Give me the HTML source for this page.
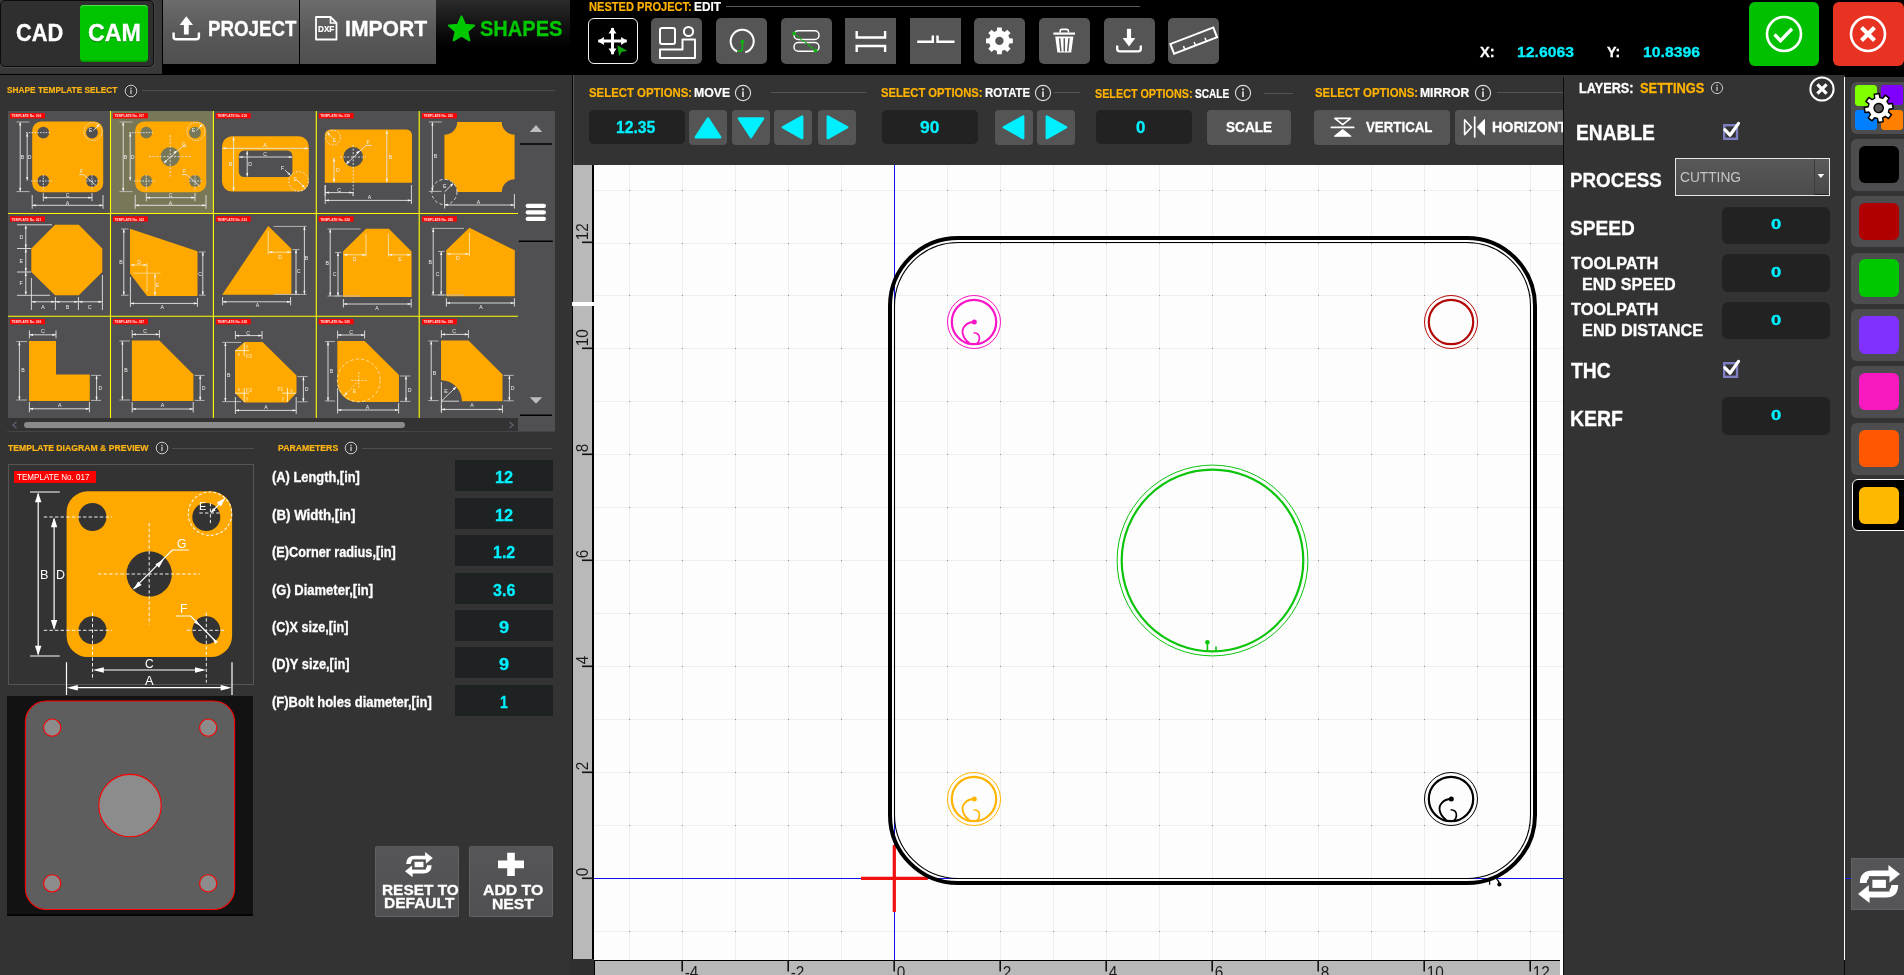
<!DOCTYPE html>
<html><head><meta charset="utf-8"><title>CAM</title>
<style>
html,body{margin:0;padding:0}
body{width:1904px;height:975px;background:#000;overflow:hidden;position:relative;font-family:"Liberation Sans",sans-serif}
svg{display:block;overflow:visible}
#root{position:absolute;left:0;top:0;width:1904px;height:975px;overflow:hidden;will-change:transform}
</style></head><body><div id="root">
<div style="position:absolute;left:0.00px;top:0.00px;width:162.00px;height:75.00px;background:#393939;"></div>
<div style="position:absolute;left:0.00px;top:73.80px;width:162.00px;height:1.20px;background:#000;"></div>
<div style="position:absolute;left:-0.50px;top:-0.50px;width:154.50px;height:67.20px;background:#2f2f2f;border:1.2px solid #0c0c0c;border-radius:5px;box-sizing:border-box;box-shadow:0 1px 0 #4a4a4a,1px 0 0 #444"></div>
<div style="position:absolute;left:80.00px;top:4.50px;width:68.20px;height:57.50px;background:#00c400;border-radius:4px;box-shadow:inset 0 -1.5px 0 #009a00,inset 0 1px 0 #4ae04a"></div>
<span style="position:absolute;left:16.13px;top:21px;font:700 24.1px/1 'Liberation Sans',sans-serif;color:#fff;white-space:nowrap;transform-origin:0 0;transform:scaleX(0.9055);-webkit-text-stroke:.3px #fff;">CAD</span>
<span style="position:absolute;left:87.87px;top:21px;font:700 24.1px/1 'Liberation Sans',sans-serif;color:#fff;white-space:nowrap;transform-origin:0 0;transform:scaleX(0.9656);text-shadow:0 1px 1px rgba(0,60,0,.6);-webkit-text-stroke:.3px #fff;">CAM</span>
<div style="position:absolute;left:163.00px;top:0.00px;width:136.00px;height:63.50px;background:linear-gradient(#6c6c6c,#595959 50%,#4f4f4f);"></div>
<div style="position:absolute;left:300.00px;top:0.00px;width:136.00px;height:63.50px;background:linear-gradient(#6c6c6c,#595959 50%,#4f4f4f);"></div>
<div style="position:absolute;left:436.00px;top:0.00px;width:134.00px;height:63.00px;background:linear-gradient(#2b2b2b,#101010 45%,#000 75%);"></div>
<span style="position:absolute;left:207.78px;top:18px;font:700 21.8px/1 'Liberation Sans',sans-serif;color:#fff;white-space:nowrap;transform-origin:0 0;transform:scaleX(0.8592);-webkit-text-stroke:.3px #fff;">PROJECT</span>
<span style="position:absolute;left:344.87px;top:18px;font:700 21.8px/1 'Liberation Sans',sans-serif;color:#fff;white-space:nowrap;transform-origin:0 0;transform:scaleX(0.9709);-webkit-text-stroke:.3px #fff;">IMPORT</span>
<span style="position:absolute;left:480.40px;top:18px;font:700 21.8px/1 'Liberation Sans',sans-serif;color:#00c800;white-space:nowrap;transform-origin:0 0;transform:scaleX(0.9186);-webkit-text-stroke:.3px #00c800;">SHAPES</span>
<svg style="position:absolute;left:170px;top:14px" width="32" height="28" viewBox="170 14 32 28"><path d="M173.6 32.5v4.2a2.6 2.6 0 0 0 2.6 2.6h20.1a2.6 2.6 0 0 0 2.6-2.6v-4.2" fill="none" stroke="#fff" stroke-width="2.4"/><path d="M186.3 16.3l6.7 8.8h-4.3v9.4h-4.8v-9.4h-4.3z" fill="#fff"/></svg>
<svg style="position:absolute;left:313px;top:14px" width="28" height="28" viewBox="313 14 28 28"><path d="M316 17h14.5l6 6v16.5h-20.5z" fill="none" stroke="#fff" stroke-width="1.8" stroke-linejoin="round"/><path d="M330.5 17v6h6" fill="none" stroke="#fff" stroke-width="1.6"/></svg>
<span style="position:absolute;left:318.47px;top:25px;font:700 9.0px/1 'Liberation Sans',sans-serif;color:#fff;white-space:nowrap;transform-origin:0 0;transform:scaleX(0.9064);-webkit-text-stroke:.2px #fff;">DXF</span>
<svg style="position:absolute;left:445px;top:13px" width="34" height="30" viewBox="445 13 34 30"><path d="M461.5 16.5l3.6 8.3 9 .8-6.8 5.9 2.1 8.8-7.9-4.7-7.9 4.7 2.1-8.8-6.8-5.9 9-.8z" fill="#00c800" stroke="#00c800" stroke-width="2" stroke-linejoin="round"/></svg>
<span style="position:absolute;left:589.28px;top:1px;font:700 12.6px/1 'Liberation Sans',sans-serif;color:#ffb300;white-space:nowrap;transform-origin:0 0;transform:scaleX(0.8794);-webkit-text-stroke:.2px #ffb300;">NESTED PROJECT:</span>
<span style="position:absolute;left:694.23px;top:1px;font:700 12.6px/1 'Liberation Sans',sans-serif;color:#fff;white-space:nowrap;transform-origin:0 0;transform:scaleX(0.9380);-webkit-text-stroke:.2px #fff;">EDIT</span>
<div style="position:absolute;left:725.50px;top:6.00px;width:414.50px;height:1.00px;background:#5a5a5a;"></div>
<span style="position:absolute;left:1479.85px;top:44px;font:700 15.3px/1 'Liberation Sans',sans-serif;color:#fff;white-space:nowrap;transform-origin:0 0;transform:scaleX(0.9547);-webkit-text-stroke:.3px #fff;">X:</span>
<span style="position:absolute;left:1516.55px;top:44px;font:700 15.3px/1 'Liberation Sans',sans-serif;color:#00f0ff;white-space:nowrap;transform-origin:0 0;transform:scaleX(1.0305);-webkit-text-stroke:.3px #00f0ff;">12.6063</span>
<span style="position:absolute;left:1607.22px;top:44px;font:700 15.3px/1 'Liberation Sans',sans-serif;color:#fff;white-space:nowrap;transform-origin:0 0;transform:scaleX(0.9279);-webkit-text-stroke:.3px #fff;">Y:</span>
<span style="position:absolute;left:1642.55px;top:44px;font:700 15.3px/1 'Liberation Sans',sans-serif;color:#00f0ff;white-space:nowrap;transform-origin:0 0;transform:scaleX(1.0305);-webkit-text-stroke:.3px #00f0ff;">10.8396</span>
<div style="position:absolute;left:1749.00px;top:2.00px;width:70.00px;height:64.00px;background:#00c000;border-radius:6px"></div>
<div style="position:absolute;left:1833.00px;top:2.00px;width:71.00px;height:64.00px;background:#e83222;border-radius:6px"></div>
<svg style="position:absolute;left:1760px;top:10px" width="48" height="48" viewBox="-24 -24 48 48"><circle r="17" fill="none" stroke="#fff" stroke-width="2.6"/><path d="M-9.5 .5l6 6.2 11.5-12" fill="none" stroke="#fff" stroke-width="3.4"/></svg>
<svg style="position:absolute;left:1844px;top:10px" width="48" height="48" viewBox="-24 -24 48 48"><circle r="17" fill="none" stroke="#fff" stroke-width="2.6"/><path d="M-6.5 -6.5l13 13M6.5 -6.5l-13 13" fill="none" stroke="#fff" stroke-width="4.2"/></svg>
<div style="position:absolute;left:587.70px;top:18.20px;width:50.30px;height:45.80px;background:#000;border:1.8px solid #f4f4f4;border-radius:6px;box-sizing:border-box"></div>
<div style="position:absolute;left:651.00px;top:18.00px;width:51.00px;height:46.00px;background:#555;border-radius:5px"></div>
<div style="position:absolute;left:716.20px;top:18.00px;width:51.00px;height:46.00px;background:#555;border-radius:5px"></div>
<div style="position:absolute;left:781.00px;top:18.00px;width:51.00px;height:46.00px;background:#555;border-radius:5px"></div>
<div style="position:absolute;left:845.20px;top:18.00px;width:51.00px;height:46.00px;background:#555;border-radius:0"></div>
<div style="position:absolute;left:910.20px;top:18.00px;width:51.00px;height:46.00px;background:#555;border-radius:0"></div>
<div style="position:absolute;left:974.00px;top:18.00px;width:51.00px;height:46.00px;background:#555;border-radius:5px"></div>
<div style="position:absolute;left:1039.00px;top:18.00px;width:51.00px;height:46.00px;background:#555;border-radius:5px"></div>
<div style="position:absolute;left:1104.00px;top:18.00px;width:51.00px;height:46.00px;background:#555;border-radius:5px"></div>
<div style="position:absolute;left:1168.00px;top:18.00px;width:51.00px;height:46.00px;background:#555;border-radius:5px"></div>
<svg style="position:absolute;left:580px;top:10px" width="650" height="60" viewBox="580 10 650 60"><path d="M598.3 41H626.7M612.5 28V54.2" stroke="#fff" stroke-width="3" fill="none"/><path d="M612.5 27.6l4 6h-8zM612.5 54.6l4-6h-8zM597.9 41l6-4v8zM627.1 41l-6-4v8z" fill="#fff"/><path d="M617.3 45.2l10 5.5-5.6 1.3-2.6 4.3z" fill="#10a010"/><rect x="660" y="28" width="15" height="16" rx="2" fill="none" stroke="#fff" stroke-width="2"/><circle cx="688.5" cy="31.5" r="4.6" fill="none" stroke="#fff" stroke-width="2"/><path d="M660 49.5h22.5v-10h12.5v18.5h-35z" fill="none" stroke="#fff" stroke-width="2" stroke-linejoin="round"/><path d="M737.2 51.6A11.5 11.5 0 1 1 745.3 52.3" fill="none" stroke="#fff" stroke-width="2"/><circle cx="742.4" cy="41.8" r="2" fill="#10b010"/><path d="M742.4 42v6.5q0 2.6-2.6 2.6h-2.2" fill="none" stroke="#10b010" stroke-width="1.6"/><rect x="794" y="30.8" width="25" height="8.7" rx="4.3" fill="none" stroke="#fff" stroke-width="1.5"/><rect x="794" y="42.5" width="25" height="8.7" rx="4.3" fill="none" stroke="#fff" stroke-width="1.5"/><path d="M794 33.5L815.5 50.7" stroke="#10b010" stroke-width="1.6" stroke-dasharray="2.4 1.2" fill="none"/><circle cx="794" cy="33.5" r="1.9" fill="#10b010"/><circle cx="815.5" cy="50.7" r="1.9" fill="#10b010"/><path d="M856.7 31v6.5h28.4V31M856.7 52v-6h28.4v6" fill="none" stroke="#fff" stroke-width="2.4"/><path d="M917.2 41.7h15.6V35.5M954.5 41.7h-17V35.5" fill="none" stroke="#fff" stroke-width="2.4"/><path d="M996.81 30.83 L997.06 27.50 L1001.74 27.50 L1001.99 30.83 L1004.69 31.95 L1007.22 29.77 L1010.53 33.08 L1008.35 35.61 L1009.47 38.31 L1012.80 38.56 L1012.80 43.24 L1009.47 43.49 L1008.35 46.19 L1010.53 48.72 L1007.22 52.03 L1004.69 49.85 L1001.99 50.97 L1001.74 54.30 L997.06 54.30 L996.81 50.97 L994.11 49.85 L991.58 52.03 L988.27 48.72 L990.45 46.19 L989.33 43.49 L986.00 43.24 L986.00 38.56 L989.33 38.31 L990.45 35.61 L988.27 33.08 L991.58 29.77 L994.11 31.95Z M995.20 40.90 a4.20 4.20 0 1 0 8.40 0 a4.20 4.20 0 1 0 -8.40 0Z" fill="#fff" fill-rule="evenodd"/><path d="M1053.4 33.6h21.6" stroke="#fff" stroke-width="2.2"/><path d="M1060.2 32.6v-1.4q0-1.8 1.8-1.8h4.6q1.8 0 1.8 1.8v1.4" fill="none" stroke="#fff" stroke-width="1.6"/><path d="M1055.2 36.6h18.2l-2.2 16h-13.8z" fill="#fff"/><path d="M1059.6 38.2l1.3 13.2M1064.3 38.2v13.2M1069 38.2l-1.3 13.2" stroke="#555" stroke-width="1.5"/><path d="M1129 28.8v10" stroke="#fff" stroke-width="4.2"/><path d="M1122.6 38h12.8l-6.4 8.6z" fill="#fff"/><path d="M1117.2 45.6v3.2a2.6 2.6 0 0 0 2.6 2.6h18.4a2.6 2.6 0 0 0 2.6-2.6v-3.2" fill="none" stroke="#fff" stroke-width="2.3"/><g transform="translate(1193.7 40.6) rotate(-21)"><rect x="-23" y="-5.2" width="46" height="10.4" fill="none" stroke="#fff" stroke-width="2"/><path d="M-11.5 5.2v-3.8M0 5.2v-3.8M11.5 5.2v-3.8" stroke="#fff" stroke-width="1.5"/></g></svg>
<div style="position:absolute;left:574.00px;top:75.00px;width:989.00px;height:89.70px;background:#333;"></div>
<span style="position:absolute;left:588.66px;top:87px;font:700 12.9px/1 'Liberation Sans',sans-serif;color:#ffb300;white-space:nowrap;transform-origin:0 0;transform:scaleX(0.8833);-webkit-text-stroke:.2px #ffb300;">SELECT OPTIONS:</span>
<span style="position:absolute;left:693.70px;top:87px;font:700 12.9px/1 'Liberation Sans',sans-serif;color:#fff;white-space:nowrap;transform-origin:0 0;transform:scaleX(0.9537);-webkit-text-stroke:.2px #fff;">MOVE</span>
<svg style="position:absolute;left:732.50px;top:82.90px" width="20" height="20" viewBox="-10 -10 20 20"><circle r="7.60" fill="none" stroke="#ddd" stroke-width="1.10"/><circle cx="0" cy="-3.65" r="1.06" fill="#ddd"/><rect x="-0.84" y="-1.67" width="1.67" height="5.70" fill="#ddd"/></svg>
<div style="position:absolute;left:770.70px;top:92.00px;width:95.00px;height:1.00px;background:#555;"></div>
<span style="position:absolute;left:881.41px;top:87px;font:700 12.9px/1 'Liberation Sans',sans-serif;color:#ffb300;white-space:nowrap;transform-origin:0 0;transform:scaleX(0.8702);-webkit-text-stroke:.2px #ffb300;">SELECT OPTIONS:</span>
<span style="position:absolute;left:984.76px;top:87px;font:700 12.9px/1 'Liberation Sans',sans-serif;color:#fff;white-space:nowrap;transform-origin:0 0;transform:scaleX(0.8836);-webkit-text-stroke:.2px #fff;">ROTATE</span>
<svg style="position:absolute;left:1032.50px;top:82.90px" width="20" height="20" viewBox="-10 -10 20 20"><circle r="7.60" fill="none" stroke="#ddd" stroke-width="1.10"/><circle cx="0" cy="-3.65" r="1.06" fill="#ddd"/><rect x="-0.84" y="-1.67" width="1.67" height="5.70" fill="#ddd"/></svg>
<div style="position:absolute;left:1053.70px;top:92.00px;width:26.30px;height:1.00px;background:#555;"></div>
<span style="position:absolute;left:1095.43px;top:88px;font:700 12.9px/1 'Liberation Sans',sans-serif;color:#ffb300;white-space:nowrap;transform-origin:0 0;transform:scaleX(0.8355);-webkit-text-stroke:.2px #ffb300;">SELECT OPTIONS:</span>
<span style="position:absolute;left:1195.20px;top:88px;font:700 12.9px/1 'Liberation Sans',sans-serif;color:#fff;white-space:nowrap;transform-origin:0 0;transform:scaleX(0.7822);-webkit-text-stroke:.2px #fff;">SCALE</span>
<svg style="position:absolute;left:1233.00px;top:83.40px" width="20" height="20" viewBox="-10 -10 20 20"><circle r="7.60" fill="none" stroke="#ddd" stroke-width="1.10"/><circle cx="0" cy="-3.65" r="1.06" fill="#ddd"/><rect x="-0.84" y="-1.67" width="1.67" height="5.70" fill="#ddd"/></svg>
<div style="position:absolute;left:1264.00px;top:92.50px;width:28.50px;height:1.00px;background:#555;"></div>
<span style="position:absolute;left:1314.66px;top:87px;font:700 12.9px/1 'Liberation Sans',sans-serif;color:#ffb300;white-space:nowrap;transform-origin:0 0;transform:scaleX(0.8833);-webkit-text-stroke:.2px #ffb300;">SELECT OPTIONS:</span>
<span style="position:absolute;left:1419.96px;top:87px;font:700 12.9px/1 'Liberation Sans',sans-serif;color:#fff;white-space:nowrap;transform-origin:0 0;transform:scaleX(0.9421);-webkit-text-stroke:.2px #fff;">MIRROR</span>
<svg style="position:absolute;left:1472.50px;top:82.90px" width="20" height="20" viewBox="-10 -10 20 20"><circle r="7.60" fill="none" stroke="#ddd" stroke-width="1.10"/><circle cx="0" cy="-3.65" r="1.06" fill="#ddd"/><rect x="-0.84" y="-1.67" width="1.67" height="5.70" fill="#ddd"/></svg>
<div style="position:absolute;left:1497.00px;top:92.00px;width:66.00px;height:1.00px;background:#555;"></div>
<div style="position:absolute;left:589.00px;top:110.00px;width:95.50px;height:33.70px;background:#222;border-radius:5px"></div>
<span style="position:absolute;left:615.56px;top:120px;font:700 16.0px/1 'Liberation Sans',sans-serif;color:#00f0ff;white-space:nowrap;transform-origin:0 0;transform:scaleX(0.9834);-webkit-text-stroke:.3px #00f0ff;">12.35</span>
<div style="position:absolute;left:882.00px;top:110.00px;width:95.70px;height:33.70px;background:#222;border-radius:5px"></div>
<span style="position:absolute;left:920.39px;top:120px;font:700 16.0px/1 'Liberation Sans',sans-serif;color:#00f0ff;white-space:nowrap;transform-origin:0 0;transform:scaleX(1.0870);-webkit-text-stroke:.3px #00f0ff;">90</span>
<div style="position:absolute;left:1096.00px;top:110.00px;width:95.70px;height:33.70px;background:#222;border-radius:5px"></div>
<span style="position:absolute;left:1136.33px;top:120px;font:700 16.0px/1 'Liberation Sans',sans-serif;color:#00f0ff;white-space:nowrap;transform-origin:0 0;transform:scaleX(1.0526);-webkit-text-stroke:.3px #00f0ff;">0</span>
<div style="position:absolute;left:689.00px;top:110.00px;width:38.00px;height:34.50px;background:#555;border-radius:4px"></div>
<div style="position:absolute;left:732.00px;top:110.00px;width:38.00px;height:34.50px;background:#555;border-radius:4px"></div>
<div style="position:absolute;left:774.00px;top:110.00px;width:38.00px;height:34.50px;background:#555;border-radius:4px"></div>
<div style="position:absolute;left:818.00px;top:110.00px;width:38.00px;height:34.50px;background:#555;border-radius:4px"></div>
<div style="position:absolute;left:995.00px;top:110.00px;width:38.00px;height:34.50px;background:#555;border-radius:4px"></div>
<div style="position:absolute;left:1037.00px;top:110.00px;width:38.00px;height:34.50px;background:#555;border-radius:4px"></div>
<svg style="position:absolute;left:574px;top:100px" width="520" height="60" viewBox="574 100 520 60"><path d="M708.00 118.40 L720.20 137.20 L695.80 137.20Z" fill="#00f0ff" stroke="#00f0ff" stroke-width="2.4" stroke-linejoin="round"/><path d="M751.00 137.20 L763.20 118.40 L738.80 118.40Z" fill="#00f0ff" stroke="#00f0ff" stroke-width="2.4" stroke-linejoin="round"/><path d="M782.80 127.30 L802.20 116.50 L802.20 138.10Z" fill="#00f0ff" stroke="#00f0ff" stroke-width="2.4" stroke-linejoin="round"/><path d="M847.20 127.30 L827.80 116.50 L827.80 138.10Z" fill="#00f0ff" stroke="#00f0ff" stroke-width="2.4" stroke-linejoin="round"/><path d="M1003.80 127.30 L1023.20 116.50 L1023.20 138.10Z" fill="#00f0ff" stroke="#00f0ff" stroke-width="2.4" stroke-linejoin="round"/><path d="M1066.20 127.30 L1046.80 116.50 L1046.80 138.10Z" fill="#00f0ff" stroke="#00f0ff" stroke-width="2.4" stroke-linejoin="round"/></svg>
<div style="position:absolute;left:1207.00px;top:110.00px;width:84.00px;height:34.50px;background:#555;border-radius:4px"></div>
<span style="position:absolute;left:1226.34px;top:119px;font:700 15.5px/1 'Liberation Sans',sans-serif;color:#fff;white-space:nowrap;transform-origin:0 0;transform:scaleX(0.8793);-webkit-text-stroke:.3px #fff;">SCALE</span>
<div style="position:absolute;left:1314.00px;top:110.00px;width:136.00px;height:34.50px;background:#555;border-radius:4px"></div>
<span style="position:absolute;left:1365.68px;top:119px;font:700 15.5px/1 'Liberation Sans',sans-serif;color:#fff;white-space:nowrap;transform-origin:0 0;transform:scaleX(0.8576);-webkit-text-stroke:.3px #fff;">VERTICAL</span>
<svg style="position:absolute;left:1325px;top:112px" width="36" height="30" viewBox="1325 112 36 30"><path d="M1331.4 127.4h22.3" stroke="#fff" stroke-width="1.7" stroke-linecap="round"/><path d="M1334.9 118.4h15.6l-7.8 6.2z" fill="none" stroke="#fff" stroke-width="1.7" stroke-linejoin="round"/><path d="M1334.6 136.2h16.2l-8.1-6.4z" fill="#fff" stroke="#fff" stroke-width="1.2" stroke-linejoin="round"/></svg>
<div style="position:absolute;left:1455px;top:110px;width:108px;height:34.5px;overflow:hidden"><div style="position:absolute;left:0;top:0;width:140px;height:34.5px;background:#555;border-radius:4px"></div><span style="position:absolute;left:37.27px;top:9px;font:700 15.5px/1 'Liberation Sans',sans-serif;color:#fff;white-space:nowrap;transform-origin:0 0;transform:scaleX(0.9245);-webkit-text-stroke:.3px #fff;">HORIZONTAL</span><svg style="position:absolute;left:5px;top:4px" width="30" height="28" viewBox="1460 114 30 28"><path d="M1474.7 117.2v19.8" stroke="#fff" stroke-width="1.7" stroke-linecap="round"/><path d="M1464.6 119.8v14.8l6.8-7.4z" fill="none" stroke="#fff" stroke-width="1.6" stroke-linejoin="round"/><path d="M1484.4 119.8v14.8l-6.8-7.4z" fill="#fff" stroke="#fff" stroke-width="1.2" stroke-linejoin="round"/></svg></div>
<div style="position:absolute;left:0.00px;top:75.00px;width:572.00px;height:900.00px;background:#333;"></div>
<div style="position:absolute;left:572.00px;top:75.00px;width:1.00px;height:900.00px;background:#060606;"></div>
<div style="position:absolute;left:573.00px;top:75.00px;width:1.00px;height:90.00px;background:#555;"></div>
<span style="position:absolute;left:7.25px;top:86px;font:700 9.3px/1 'Liberation Sans',sans-serif;color:#fdb515;white-space:nowrap;transform-origin:0 0;transform:scaleX(0.8947);-webkit-text-stroke:.2px #fdb515;">SHAPE TEMPLATE SELECT</span>
<svg style="position:absolute;left:121.00px;top:80.60px" width="20" height="20" viewBox="-10 -10 20 20"><circle r="5.80" fill="none" stroke="#ccc" stroke-width="1.00"/><circle cx="0" cy="-2.78" r="0.81" fill="#ccc"/><rect x="-0.64" y="-1.28" width="1.28" height="4.35" fill="#ccc"/></svg>
<div style="position:absolute;left:142.00px;top:90.20px;width:413.00px;height:1.00px;background:#4e4e4e;"></div>
<div style="position:absolute;left:7.80px;top:110.80px;width:547.20px;height:321.20px;background:#505052;"></div>
<div style="position:absolute;left:8.00px;top:418.00px;width:510.00px;height:13.00px;background:#333;"></div>
<div style="position:absolute;left:7.00px;top:431.00px;width:548.00px;height:1.00px;background:#444;"></div>
<div style="position:absolute;left:24.00px;top:422.00px;width:381.00px;height:6.00px;background:#8a8a8a;border-radius:3px"></div>
<svg style="position:absolute;left:10px;top:419px" width="510" height="12" viewBox="10 419 510 12"><path d="M16.5 422l-3.6 3 3.6 3" fill="none" stroke="#5a6272" stroke-width="1.4"/><path d="M509.5 422l3.6 3-3.6 3" fill="none" stroke="#5a6272" stroke-width="1.4"/></svg>
<svg style="position:absolute;left:518px;top:111px" width="37" height="320" viewBox="518 111 37 320"><path d="M529.8 132h12.4l-6.2-7z" fill="#bdbdbd"/><path d="M529.8 397.3h12.4l-6.2 6.4z" fill="#bdbdbd"/><path d="M520 144h32M518.8 241.3h34M520 415.3h32" stroke="#000" stroke-width="1.5"/><rect x="525.6" y="203.7" width="20.4" height="4.3" rx="2.1" fill="#fff"/><rect x="525.6" y="210.3" width="20.4" height="4.3" rx="2.1" fill="#fff"/><rect x="525.6" y="216.8" width="20.4" height="4.3" rx="2.1" fill="#fff"/></svg>
<span style="position:absolute;left:8.31px;top:444px;font:700 9.2px/1 'Liberation Sans',sans-serif;color:#fdb515;white-space:nowrap;transform-origin:0 0;transform:scaleX(0.9405);-webkit-text-stroke:.2px #fdb515;">TEMPLATE DIAGRAM &amp; PREVIEW</span>
<svg style="position:absolute;left:151.50px;top:438.20px" width="20" height="20" viewBox="-10 -10 20 20"><circle r="5.80" fill="none" stroke="#ccc" stroke-width="1.00"/><circle cx="0" cy="-2.78" r="0.81" fill="#ccc"/><rect x="-0.64" y="-1.28" width="1.28" height="4.35" fill="#ccc"/></svg>
<div style="position:absolute;left:172.30px;top:447.80px;width:81.30px;height:1.00px;background:#4e4e4e;"></div>
<span style="position:absolute;left:278.23px;top:444px;font:700 9.2px/1 'Liberation Sans',sans-serif;color:#fdb515;white-space:nowrap;transform-origin:0 0;transform:scaleX(0.9460);-webkit-text-stroke:.2px #fdb515;">PARAMETERS</span>
<svg style="position:absolute;left:340.90px;top:438.20px" width="20" height="20" viewBox="-10 -10 20 20"><circle r="5.80" fill="none" stroke="#ccc" stroke-width="1.00"/><circle cx="0" cy="-2.78" r="0.81" fill="#ccc"/><rect x="-0.64" y="-1.28" width="1.28" height="4.35" fill="#ccc"/></svg>
<div style="position:absolute;left:361.50px;top:447.80px;width:190.50px;height:1.00px;background:#4e4e4e;"></div>
<div style="position:absolute;left:7.50px;top:464.30px;width:246.50px;height:220.70px;background:transparent;border:1px solid #555;box-sizing:border-box"></div>
<div style="position:absolute;left:13.80px;top:471.00px;width:82.20px;height:12.40px;background:#ff0000;"></div>
<span style="position:absolute;left:16.84px;top:473px;font:400 9.3px/1 'Liberation Sans',sans-serif;color:#fff;white-space:nowrap;transform-origin:0 0;transform:scaleX(0.8684);">TEMPLATE No. 017</span>
<svg style="position:absolute;left:0px;top:460px" width="260" height="240" viewBox="0 460 260 240"><rect x="66.6" y="491.3" width="165.5" height="165.7" rx="21" fill="#ffa800"/><circle cx="92.5" cy="517" r="14" fill="#333"/><circle cx="206.3" cy="517" r="14" fill="#333"/><circle cx="92.5" cy="630.3" r="14" fill="#333"/><circle cx="206.3" cy="630.3" r="14" fill="#333"/><circle cx="149.2" cy="574" r="22.7" fill="#333"/><g stroke="#fff" fill="none" stroke-width="1" stroke-dasharray="3.4 2.2" opacity=".92"><path d="M43.8 517H112M43.8 630.3H112M98 574H200M149.2 523V624.5M92.5 612.6V680M206.3 612.6V682.7M187 630.3H226.4M199.4 513H220.3M210.4 503V524.5"/><circle cx="210" cy="513.7" r="21.7" stroke-width="1.1" stroke-dasharray="3 2"/></g><g stroke="#fff" fill="none" stroke-width="1.2"><path d="M30 492H59.8M30 656H59.8M38.2 494V654M54.1 519V628M66.5 662.3V695M232 662.3V695M96 670H203M70 687.7H228"/><path d="M188.8 550H172.3L133.5 588.8M176 616H190.7L215.4 641M211.2 512.4L225 498.3"/></g><path d="M38.20 492.30L41.40 502.30L35.00 502.30Z" fill="#fff"/><path d="M38.20 655.70L35.00 645.70L41.40 645.70Z" fill="#fff"/><path d="M54.10 517.30L57.30 527.30L50.90 527.30Z" fill="#fff"/><path d="M54.10 630.00L50.90 620.00L57.30 620.00Z" fill="#fff"/><path d="M92.80 670.00L103.80 667.20L103.80 672.80Z" fill="#fff"/><path d="M206.00 670.00L195.00 672.80L195.00 667.20Z" fill="#fff"/><path d="M66.80 687.70L77.80 684.90L77.80 690.50Z" fill="#fff"/><path d="M231.70 687.70L220.70 690.50L220.70 684.90Z" fill="#fff"/><path d="M163.60 559.60L159.07 567.80L155.40 564.13Z" fill="#fff"/><path d="M133.50 589.60L138.05 581.41L141.72 585.10Z" fill="#fff"/><path d="M199.50 625.60L194.00 622.60L196.56 620.07Z" fill="#fff"/><path d="M212.50 638.30L217.93 641.42L215.32 643.90Z" fill="#fff"/><path d="M225.20 498.10L221.02 506.61L216.74 502.40Z" fill="#fff"/><path d="M211.20 512.40L213.08 507.93L215.64 510.47Z" fill="#fff"/></svg>
<span style="position:absolute;left:39.88px;top:568px;font:400 13.1px/1 'Liberation Sans',sans-serif;color:#fff;white-space:nowrap;transform-origin:0 0;transform:scaleX(0.9703);">B</span>
<span style="position:absolute;left:55.61px;top:568px;font:400 13.1px/1 'Liberation Sans',sans-serif;color:#fff;white-space:nowrap;transform-origin:0 0;transform:scaleX(0.9494);">D</span>
<span style="position:absolute;left:144.80px;top:658px;font:400 12.8px/1 'Liberation Sans',sans-serif;color:#fff;white-space:nowrap;transform-origin:0 0;transform:scaleX(0.9350);">C</span>
<span style="position:absolute;left:144.90px;top:675px;font:400 12.8px/1 'Liberation Sans',sans-serif;color:#fff;white-space:nowrap;transform-origin:0 0;transform:scaleX(1.0103);">A</span>
<span style="position:absolute;left:176.69px;top:538px;font:400 12.8px/1 'Liberation Sans',sans-serif;color:#fff;white-space:nowrap;transform-origin:0 0;transform:scaleX(0.9542);">G</span>
<span style="position:absolute;left:179.82px;top:603px;font:400 12.5px/1 'Liberation Sans',sans-serif;color:#fff;white-space:nowrap;transform-origin:0 0;transform:scaleX(0.9796);">F</span>
<span style="position:absolute;left:199.12px;top:501px;font:400 11.8px/1 'Liberation Sans',sans-serif;color:#fff;white-space:nowrap;transform-origin:0 0;transform:scaleX(0.9330);">E</span>
<div style="position:absolute;left:7.00px;top:696.00px;width:246.00px;height:220.40px;background:#121212;border-bottom:2px solid #050505;box-sizing:border-box"></div>
<svg style="position:absolute;left:0px;top:690px" width="260" height="230" viewBox="0 690 260 230"><rect x="25.4" y="701" width="209.2" height="208.5" rx="21" fill="#5e5e5e" stroke="#f00" stroke-width="1.1"/><circle cx="130" cy="805.6" r="31.2" fill="#8c8c8c" stroke="#f00" stroke-width="1.1"/><circle cx="52.2" cy="727.6" r="8.6" fill="#8c8c8c" stroke="#f00" stroke-width="1.1"/><circle cx="208.2" cy="727.6" r="8.6" fill="#8c8c8c" stroke="#f00" stroke-width="1.1"/><circle cx="52.2" cy="883.4" r="8.6" fill="#8c8c8c" stroke="#f00" stroke-width="1.1"/><circle cx="208.2" cy="883.4" r="8.6" fill="#8c8c8c" stroke="#f00" stroke-width="1.1"/></svg>
<div style="position:absolute;left:455.20px;top:460.00px;width:97.90px;height:31.00px;background:#1f2223;"></div>
<span style="position:absolute;left:272.36px;top:470px;font:700 14.0px/1 'Liberation Sans',sans-serif;color:#fff;white-space:nowrap;transform-origin:0 0;transform:scaleX(0.9187);-webkit-text-stroke:.3px #fff;">(A) Length,[in]</span>
<span style="position:absolute;left:495.03px;top:469px;font:700 16.1px/1 'Liberation Sans',sans-serif;color:#00f0ff;white-space:nowrap;transform-origin:0 0;transform:scaleX(1.0085);-webkit-text-stroke:.3px #00f0ff;">12</span>
<div style="position:absolute;left:455.20px;top:498.00px;width:97.90px;height:31.00px;background:#1f2223;"></div>
<span style="position:absolute;left:272.33px;top:508px;font:700 14.0px/1 'Liberation Sans',sans-serif;color:#fff;white-space:nowrap;transform-origin:0 0;transform:scaleX(0.9508);-webkit-text-stroke:.3px #fff;">(B) Width,[in]</span>
<span style="position:absolute;left:495.03px;top:507px;font:700 16.1px/1 'Liberation Sans',sans-serif;color:#00f0ff;white-space:nowrap;transform-origin:0 0;transform:scaleX(1.0085);-webkit-text-stroke:.3px #00f0ff;">12</span>
<div style="position:absolute;left:455.20px;top:535.00px;width:97.90px;height:31.00px;background:#1f2223;"></div>
<span style="position:absolute;left:272.36px;top:545px;font:700 14.0px/1 'Liberation Sans',sans-serif;color:#fff;white-space:nowrap;transform-origin:0 0;transform:scaleX(0.9093);-webkit-text-stroke:.3px #fff;">(E)Corner radius,[in]</span>
<span style="position:absolute;left:492.94px;top:544px;font:700 16.1px/1 'Liberation Sans',sans-serif;color:#00f0ff;white-space:nowrap;transform-origin:0 0;transform:scaleX(0.9919);-webkit-text-stroke:.3px #00f0ff;">1.2</span>
<div style="position:absolute;left:455.20px;top:573.00px;width:97.90px;height:31.00px;background:#1f2223;"></div>
<span style="position:absolute;left:272.35px;top:583px;font:700 14.0px/1 'Liberation Sans',sans-serif;color:#fff;white-space:nowrap;transform-origin:0 0;transform:scaleX(0.9275);-webkit-text-stroke:.3px #fff;">(G) Diameter,[in]</span>
<span style="position:absolute;left:493.10px;top:582px;font:700 16.1px/1 'Liberation Sans',sans-serif;color:#00f0ff;white-space:nowrap;transform-origin:0 0;transform:scaleX(0.9994);-webkit-text-stroke:.3px #00f0ff;">3.6</span>
<div style="position:absolute;left:455.20px;top:610.00px;width:97.90px;height:31.00px;background:#1f2223;"></div>
<span style="position:absolute;left:272.37px;top:620px;font:700 14.0px/1 'Liberation Sans',sans-serif;color:#fff;white-space:nowrap;transform-origin:0 0;transform:scaleX(0.9004);-webkit-text-stroke:.3px #fff;">(C)X size,[in]</span>
<span style="position:absolute;left:499.16px;top:619px;font:700 16.1px/1 'Liberation Sans',sans-serif;color:#00f0ff;white-space:nowrap;transform-origin:0 0;transform:scaleX(1.1270);-webkit-text-stroke:.3px #00f0ff;">9</span>
<div style="position:absolute;left:455.20px;top:647.00px;width:97.90px;height:31.00px;background:#1f2223;"></div>
<span style="position:absolute;left:272.36px;top:657px;font:700 14.0px/1 'Liberation Sans',sans-serif;color:#fff;white-space:nowrap;transform-origin:0 0;transform:scaleX(0.9179);-webkit-text-stroke:.3px #fff;">(D)Y size,[in]</span>
<span style="position:absolute;left:499.16px;top:656px;font:700 16.1px/1 'Liberation Sans',sans-serif;color:#00f0ff;white-space:nowrap;transform-origin:0 0;transform:scaleX(1.1270);-webkit-text-stroke:.3px #00f0ff;">9</span>
<div style="position:absolute;left:455.20px;top:685.00px;width:97.90px;height:31.00px;background:#1f2223;"></div>
<span style="position:absolute;left:272.35px;top:695px;font:700 14.0px/1 'Liberation Sans',sans-serif;color:#fff;white-space:nowrap;transform-origin:0 0;transform:scaleX(0.9249);-webkit-text-stroke:.3px #fff;">(F)Bolt holes diameter,[in]</span>
<span style="position:absolute;left:500.06px;top:694px;font:700 16.1px/1 'Liberation Sans',sans-serif;color:#00f0ff;white-space:nowrap;transform-origin:0 0;transform:scaleX(0.8722);-webkit-text-stroke:.3px #00f0ff;">1</span>
<div style="position:absolute;left:375.00px;top:845.50px;width:84.20px;height:71.50px;background:linear-gradient(#565658,#505052);border:1px solid #626266;border-top-color:#5a5a5c;border-radius:2px;box-sizing:border-box"></div>
<div style="position:absolute;left:468.80px;top:846.00px;width:84.00px;height:71.00px;background:linear-gradient(#565658,#505052);border:1px solid #626266;border-top-color:#5a5a5c;border-radius:2px;box-sizing:border-box"></div>
<span style="position:absolute;left:381.70px;top:882px;font:700 15.3px/1 'Liberation Sans',sans-serif;color:#fff;white-space:nowrap;transform-origin:0 0;transform:scaleX(1.0069);-webkit-text-stroke:.3px #fff;">RESET TO</span>
<span style="position:absolute;left:383.69px;top:895px;font:700 15.3px/1 'Liberation Sans',sans-serif;color:#fff;white-space:nowrap;transform-origin:0 0;transform:scaleX(1.0141);-webkit-text-stroke:.3px #fff;">DEFAULT</span>
<span style="position:absolute;left:483.21px;top:882px;font:700 15.3px/1 'Liberation Sans',sans-serif;color:#fff;white-space:nowrap;transform-origin:0 0;transform:scaleX(1.0314);-webkit-text-stroke:.3px #fff;">ADD TO</span>
<span style="position:absolute;left:491.68px;top:896px;font:700 15.3px/1 'Liberation Sans',sans-serif;color:#fff;white-space:nowrap;transform-origin:0 0;transform:scaleX(1.0271);-webkit-text-stroke:.3px #fff;">NEST</span>
<svg style="position:absolute;left:495px;top:850px" width="32" height="30" viewBox="495 850 32 30"><path d="M498 864.4h26M511 852.7v23.4" stroke="#fff" stroke-width="7.6"/></svg>
<svg style="position:absolute;left:404.6px;top:851.8px" width="27.8" height="25.2" viewBox="0 0 28 25.2" preserveAspectRatio="none"><path d="M24 6H9.5Q3.5 6 3.5 12" fill="none" stroke="#fff" stroke-width="4.6"/><path d="M20.3 0L28 6 20.3 12.2z" fill="#fff"/><path d="M4 19.2H18.5Q24.5 19.2 24.5 13.2" fill="none" stroke="#fff" stroke-width="4.6"/><path d="M7.7 13L0 19.2 7.7 25.2z" fill="#fff"/><rect x="8.4" y="8.6" width="11.4" height="7.8" fill="#fff" stroke="#525254" stroke-width="2.4"/></svg>
<div style="position:absolute;left:8px;top:111px;width:510px;height:307px;overflow:hidden"><svg style="position:absolute;left:0;top:0" width="510" height="307" viewBox="8 111 510 307"><rect x="111" y="111" width="102.2" height="102.4" fill="#787858"/><rect x="32.20" y="121.6" width="71" height="70.6" rx="9" fill="#ffa800"/><circle cx="43.30" cy="132.60" r="5.9" fill="#505052"/><circle cx="92.00" cy="132.60" r="5.9" fill="#505052"/><circle cx="43.30" cy="181.00" r="5.9" fill="#505052"/><circle cx="92.00" cy="181.00" r="5.9" fill="#505052"/><path d="M20.20 122.00V191.60" stroke="#e4e4e4" stroke-width=".9" fill="none"/><path d="M20.20 122.00L21.30 125.60L19.10 125.60Z" fill="#f2f2f2"/><path d="M20.20 191.60L19.10 188.00L21.30 188.00Z" fill="#f2f2f2"/><path d="M16.50 122.00H29.50M16.50 191.60H29.50" stroke="#bdbdbd" stroke-width=".9" fill="none"/><path d="M27.20 133.00V180.60" stroke="#e4e4e4" stroke-width=".9" fill="none"/><path d="M27.20 133.00L28.30 136.60L26.10 136.60Z" fill="#f2f2f2"/><path d="M27.20 180.60L26.10 177.00L28.30 177.00Z" fill="#f2f2f2"/><path d="M24.00 133.00H24.00M24.00 180.60H24.00" stroke="#bdbdbd" stroke-width=".9" fill="none"/><path d="M43.30 197.70H92.00" stroke="#e4e4e4" stroke-width=".9" fill="none"/><path d="M43.30 197.70L46.90 196.60L46.90 198.80Z" fill="#f2f2f2"/><path d="M92.00 197.70L88.40 198.80L88.40 196.60Z" fill="#f2f2f2"/><path d="M43.30 193.00V201.20M92.00 193.00V201.20" stroke="#e4e4e4" stroke-width=".9" fill="none"/><path d="M32.20 205.30H103.00" stroke="#e4e4e4" stroke-width=".9" fill="none"/><path d="M32.20 205.30L35.80 204.20L35.80 206.40Z" fill="#f2f2f2"/><path d="M103.00 205.30L99.40 206.40L99.40 204.20Z" fill="#f2f2f2"/><path d="M32.20 195.00V208.80M103.00 195.00V208.80" stroke="#e4e4e4" stroke-width=".9" fill="none"/><g stroke="#e4e4e4" stroke-width=".9" fill="none" stroke-dasharray="1.6 1.2"><path d="M26.00 132.6H51.00M31.00 181H52.00M43.30 175V190M92.00 175V190M86.00 181H100.00"/><circle cx="93.00" cy="131.5" r="9"/></g><path d="M79.00 174.6h4.5L96.50 186" stroke="#e4e4e4" stroke-width=".9" fill="none"/><path d="M93.50 130.5L99.20 124.5" stroke="#e4e4e4" stroke-width=".9" fill="none"/><path d="M99.60 124.20L98.17 127.55L96.30 125.74Z" fill="#f2f2f2"/><text x="22.60" y="159.00" font-family="Liberation Sans,sans-serif" font-size="5.2" fill="#eee" text-anchor="middle">B</text><text x="29.60" y="159.00" font-family="Liberation Sans,sans-serif" font-size="5.2" fill="#eee" text-anchor="middle">D</text><text x="67.60" y="197.00" font-family="Liberation Sans,sans-serif" font-size="5.2" fill="#eee" text-anchor="middle">C</text><text x="67.60" y="204.60" font-family="Liberation Sans,sans-serif" font-size="5.2" fill="#eee" text-anchor="middle">A</text><text x="81.60" y="173.40" font-family="Liberation Sans,sans-serif" font-size="5.2" fill="#eee" text-anchor="middle">F</text><text x="90.60" y="131.60" font-family="Liberation Sans,sans-serif" font-size="5.2" fill="#eee" text-anchor="middle">E</text><rect x="135.20" y="121.6" width="71" height="70.6" rx="9" fill="#ffa800"/><circle cx="146.30" cy="132.60" r="5.9" fill="#787858"/><circle cx="195.00" cy="132.60" r="5.9" fill="#787858"/><circle cx="146.30" cy="181.00" r="5.9" fill="#787858"/><circle cx="195.00" cy="181.00" r="5.9" fill="#787858"/><path d="M123.20 122.00V191.60" stroke="#e4e4e4" stroke-width=".9" fill="none"/><path d="M123.20 122.00L124.30 125.60L122.10 125.60Z" fill="#f2f2f2"/><path d="M123.20 191.60L122.10 188.00L124.30 188.00Z" fill="#f2f2f2"/><path d="M119.50 122.00H132.50M119.50 191.60H132.50" stroke="#bdbdbd" stroke-width=".9" fill="none"/><path d="M130.20 133.00V180.60" stroke="#e4e4e4" stroke-width=".9" fill="none"/><path d="M130.20 133.00L131.30 136.60L129.10 136.60Z" fill="#f2f2f2"/><path d="M130.20 180.60L129.10 177.00L131.30 177.00Z" fill="#f2f2f2"/><path d="M127.00 133.00H127.00M127.00 180.60H127.00" stroke="#bdbdbd" stroke-width=".9" fill="none"/><path d="M146.30 197.70H195.00" stroke="#e4e4e4" stroke-width=".9" fill="none"/><path d="M146.30 197.70L149.90 196.60L149.90 198.80Z" fill="#f2f2f2"/><path d="M195.00 197.70L191.40 198.80L191.40 196.60Z" fill="#f2f2f2"/><path d="M146.30 193.00V201.20M195.00 193.00V201.20" stroke="#e4e4e4" stroke-width=".9" fill="none"/><path d="M135.20 205.30H206.00" stroke="#e4e4e4" stroke-width=".9" fill="none"/><path d="M135.20 205.30L138.80 204.20L138.80 206.40Z" fill="#f2f2f2"/><path d="M206.00 205.30L202.40 206.40L202.40 204.20Z" fill="#f2f2f2"/><path d="M135.20 195.00V208.80M206.00 195.00V208.80" stroke="#e4e4e4" stroke-width=".9" fill="none"/><g stroke="#e4e4e4" stroke-width=".9" fill="none" stroke-dasharray="1.6 1.2"><path d="M129.00 132.6H154.00M134.00 181H155.00M146.30 175V190M195.00 175V190M189.00 181H203.00"/><circle cx="196.00" cy="131.5" r="9"/></g><path d="M182.00 174.6h4.5L199.50 186" stroke="#e4e4e4" stroke-width=".9" fill="none"/><path d="M196.50 130.5L202.20 124.5" stroke="#e4e4e4" stroke-width=".9" fill="none"/><path d="M202.60 124.20L201.17 127.55L199.30 125.74Z" fill="#f2f2f2"/><text x="125.60" y="159.00" font-family="Liberation Sans,sans-serif" font-size="5.2" fill="#eee" text-anchor="middle">B</text><text x="132.60" y="159.00" font-family="Liberation Sans,sans-serif" font-size="5.2" fill="#eee" text-anchor="middle">D</text><text x="170.60" y="197.00" font-family="Liberation Sans,sans-serif" font-size="5.2" fill="#eee" text-anchor="middle">C</text><text x="170.60" y="204.60" font-family="Liberation Sans,sans-serif" font-size="5.2" fill="#eee" text-anchor="middle">A</text><text x="184.60" y="173.40" font-family="Liberation Sans,sans-serif" font-size="5.2" fill="#eee" text-anchor="middle">F</text><text x="193.60" y="131.60" font-family="Liberation Sans,sans-serif" font-size="5.2" fill="#eee" text-anchor="middle">E</text><circle cx="170.20" cy="156.6" r="9.6" fill="#787858"/><g stroke="#e4e4e4" stroke-width=".9" fill="none" stroke-dasharray="2 1.6"><path d="M149 156.6H192M170.2 135V178"/></g><path d="M186.6 146.4h-4L164 162.8" stroke="#e4e4e4" stroke-width=".9" fill="none"/><path d="M176.80 150.60L175.07 154.01L173.29 152.12Z" fill="#f2f2f2"/><path d="M163.60 163.40L165.23 159.94L167.06 161.77Z" fill="#f2f2f2"/><text x="183.80" y="145.60" font-family="Liberation Sans,sans-serif" font-size="5.2" fill="#eee" text-anchor="middle">G</text><path d="M232 136.2h66.8a10 10 0 0 1 10 10v35.4a10 10 0 0 1-10 10H232a10 10 0 0 1-10-10v-35.4a10 10 0 0 1 10-10zM244 150.6a5.2 5.2 0 0 0-5.2 5.2v16a5.2 5.2 0 0 0 5.2 5.2h43.2a5.2 5.2 0 0 0 5.2-5.2v-16a5.2 5.2 0 0 0-5.2-5.2z" fill="#ffa800" fill-rule="evenodd"/><path d="M222.4 148.3H308.4M233.6 137V191M239 157H292.4M247.2 151V176.6" stroke="#e4e4e4" stroke-width=".9" fill="none"/><path d="M222.40 148.30L226.00 147.20L226.00 149.40Z" fill="#f2f2f2"/><path d="M308.40 148.30L304.80 149.40L304.80 147.20Z" fill="#f2f2f2"/><path d="M233.60 137.00L234.70 140.60L232.50 140.60Z" fill="#f2f2f2"/><path d="M233.60 191.00L232.50 187.40L234.70 187.40Z" fill="#f2f2f2"/><path d="M239.00 157.00L242.60 155.90L242.60 158.10Z" fill="#f2f2f2"/><path d="M292.40 157.00L288.80 158.10L288.80 155.90Z" fill="#f2f2f2"/><path d="M247.20 151.00L248.30 154.60L246.10 154.60Z" fill="#f2f2f2"/><path d="M247.20 176.60L246.10 173.00L248.30 173.00Z" fill="#f2f2f2"/><circle cx="298.6" cy="181.4" r="9.8" stroke="#e4e4e4" stroke-width=".9" fill="none" stroke-dasharray="2 1.6"/><path d="M285 170l5.4 5.2M297 180l7.6 7.6" stroke="#e4e4e4" stroke-width=".9" fill="none"/><path d="M290.40 175.20L287.41 173.98L289.07 172.25Z" fill="#f2f2f2"/><path d="M304.80 187.80L301.83 186.53L303.53 184.83Z" fill="#f2f2f2"/><text x="265.00" y="146.80" font-family="Liberation Sans,sans-serif" font-size="5.2" fill="#eee" text-anchor="middle">A</text><text x="265.00" y="156.00" font-family="Liberation Sans,sans-serif" font-size="5.2" fill="#eee" text-anchor="middle">C</text><text x="230.40" y="166.00" font-family="Liberation Sans,sans-serif" font-size="5.2" fill="#eee" text-anchor="middle">B</text><text x="250.20" y="166.00" font-family="Liberation Sans,sans-serif" font-size="5.2" fill="#eee" text-anchor="middle">D</text><text x="282.60" y="169.60" font-family="Liberation Sans,sans-serif" font-size="5.2" fill="#eee" text-anchor="middle">F</text><text x="295.60" y="181.00" font-family="Liberation Sans,sans-serif" font-size="5.2" fill="#eee" text-anchor="middle">E</text><path d="M330 129.6h76.6a5.4 5.4 0 0 1 5.4 5.4v47.8h-87.2V135a5.4 5.4 0 0 1 5.4-5.4z" fill="#ffa800"/><circle cx="353.2" cy="157" r="9.9" fill="#505052"/><g stroke="#e4e4e4" stroke-width=".9" fill="none" stroke-dasharray="2 1.6"><path d="M340 157H366M353.2 145V196"/><circle cx="333" cy="137.6" r="7.4"/></g><path d="M371.6 145.4h-5.6L346 164.4M327 132.2l5 5.2M386.8 130.6V182M334 158V182" stroke="#e4e4e4" stroke-width=".9" fill="none"/><path d="M359.60 150.60L357.85 154.25L355.90 152.24Z" fill="#f2f2f2"/><path d="M346.00 164.20L347.65 160.50L349.65 162.45Z" fill="#f2f2f2"/><path d="M327.20 132.40L330.14 133.73L328.41 135.40Z" fill="#f2f2f2"/><path d="M386.80 130.40L387.90 134.00L385.70 134.00Z" fill="#f2f2f2"/><path d="M386.80 182.40L385.70 178.80L387.90 178.80Z" fill="#f2f2f2"/><path d="M334.00 158.00L335.10 161.60L332.90 161.60Z" fill="#f2f2f2"/><path d="M334.00 182.40L332.90 178.80L335.10 178.80Z" fill="#f2f2f2"/><path d="M325.20 192.60H353.00" stroke="#e4e4e4" stroke-width=".9" fill="none"/><path d="M325.20 192.60L328.80 191.50L328.80 193.70Z" fill="#f2f2f2"/><path d="M353.00 192.60L349.40 193.70L349.40 191.50Z" fill="#f2f2f2"/><path d="M325.20 185.00V196.10M353.00 192.00V196.10" stroke="#e4e4e4" stroke-width=".9" fill="none"/><path d="M325.20 200.40H411.40" stroke="#e4e4e4" stroke-width=".9" fill="none"/><path d="M325.20 200.40L328.80 199.30L328.80 201.50Z" fill="#f2f2f2"/><path d="M411.40 200.40L407.80 201.50L407.80 199.30Z" fill="#f2f2f2"/><path d="M325.20 185.00V203.90M411.40 185.00V203.90" stroke="#e4e4e4" stroke-width=".9" fill="none"/><text x="334.40" y="141.80" font-family="Liberation Sans,sans-serif" font-size="5.2" fill="#eee" text-anchor="middle">E</text><text x="368.20" y="144.00" font-family="Liberation Sans,sans-serif" font-size="5.2" fill="#eee" text-anchor="middle">F</text><text x="390.40" y="159.00" font-family="Liberation Sans,sans-serif" font-size="5.2" fill="#eee" text-anchor="middle">B</text><text x="337.80" y="172.00" font-family="Liberation Sans,sans-serif" font-size="5.2" fill="#eee" text-anchor="middle">D</text><text x="339.00" y="191.60" font-family="Liberation Sans,sans-serif" font-size="5.2" fill="#eee" text-anchor="middle">C</text><text x="369.60" y="198.60" font-family="Liberation Sans,sans-serif" font-size="5.2" fill="#eee" text-anchor="middle">A</text><path d="M457.2 121.9h44.6a12.8 12.8 0 0 0 12.8 12.8v44.6a12.8 12.8 0 0 0-12.8 12.8h-44.6a12.8 12.8 0 0 0-12.8-12.8v-44.6a12.8 12.8 0 0 0 12.8-12.8z" fill="#ffa800"/><path d="M432.40 122.00V191.40" stroke="#e4e4e4" stroke-width=".9" fill="none"/><path d="M432.40 122.00L433.50 125.60L431.30 125.60Z" fill="#f2f2f2"/><path d="M432.40 191.40L431.30 187.80L433.50 187.80Z" fill="#f2f2f2"/><path d="M429.00 122.00H441.60M429.00 191.40H441.60" stroke="#bdbdbd" stroke-width=".9" fill="none"/><path d="M444.60 205.00H514.40" stroke="#e4e4e4" stroke-width=".9" fill="none"/><path d="M444.60 205.00L448.20 203.90L448.20 206.10Z" fill="#f2f2f2"/><path d="M514.40 205.00L510.80 206.10L510.80 203.90Z" fill="#f2f2f2"/><path d="M444.60 194.00V208.50M514.40 194.00V208.50" stroke="#e4e4e4" stroke-width=".9" fill="none"/><circle cx="444.4" cy="192" r="12.6" stroke="#e4e4e4" stroke-width=".9" fill="none" stroke-dasharray="3 2.4"/><path d="M444.4 192l8.8-8.6" stroke="#e4e4e4" stroke-width=".9" fill="none"/><path d="M453.40 183.20L451.73 186.65L449.92 184.79Z" fill="#f2f2f2"/><text x="435.40" y="158.00" font-family="Liberation Sans,sans-serif" font-size="5.2" fill="#eee" text-anchor="middle">B</text><text x="478.60" y="203.60" font-family="Liberation Sans,sans-serif" font-size="5.2" fill="#eee" text-anchor="middle">A</text><text x="444.80" y="188.20" font-family="Liberation Sans,sans-serif" font-size="5.2" fill="#eee" text-anchor="middle">E</text><path d="M55 224.8h23.8l23.5 23.7v23.4l-23.5 23.4H55l-23.7-23.4v-23.4z" fill="#ffa800"/><path d="M17 224.8H52M17 248.5H31M17 272H31M17 295.3H50M25.8 226V294M31.4 278V310M55.4 297V310M78.4 297V310M102.4 275V310M32 301.8H102" stroke="#e4e4e4" stroke-width=".9" fill="none"/><path d="M25.80 225.20L26.90 228.80L24.70 228.80Z" fill="#f2f2f2"/><path d="M25.80 248.20L24.70 244.60L26.90 244.60Z" fill="#f2f2f2"/><path d="M25.80 248.80L26.90 252.40L24.70 252.40Z" fill="#f2f2f2"/><path d="M25.80 271.60L24.70 268.00L26.90 268.00Z" fill="#f2f2f2"/><path d="M25.80 272.40L26.90 276.00L24.70 276.00Z" fill="#f2f2f2"/><path d="M25.80 295.00L24.70 291.40L26.90 291.40Z" fill="#f2f2f2"/><path d="M31.80 301.80L35.40 300.70L35.40 302.90Z" fill="#f2f2f2"/><path d="M55.00 301.80L51.40 302.90L51.40 300.70Z" fill="#f2f2f2"/><path d="M55.80 301.80L59.40 300.70L59.40 302.90Z" fill="#f2f2f2"/><path d="M78.00 301.80L74.40 302.90L74.40 300.70Z" fill="#f2f2f2"/><path d="M78.80 301.80L82.40 300.70L82.40 302.90Z" fill="#f2f2f2"/><path d="M102.00 301.80L98.40 302.90L98.40 300.70Z" fill="#f2f2f2"/><text x="21.40" y="238.60" font-family="Liberation Sans,sans-serif" font-size="5.2" fill="#eee" text-anchor="middle">D</text><text x="21.20" y="262.60" font-family="Liberation Sans,sans-serif" font-size="5.2" fill="#eee" text-anchor="middle">E</text><text x="21.00" y="285.00" font-family="Liberation Sans,sans-serif" font-size="5.2" fill="#eee" text-anchor="middle">F</text><text x="43.00" y="309.40" font-family="Liberation Sans,sans-serif" font-size="5.2" fill="#eee" text-anchor="middle">A</text><text x="67.40" y="309.40" font-family="Liberation Sans,sans-serif" font-size="5.2" fill="#eee" text-anchor="middle">B</text><text x="89.60" y="309.40" font-family="Liberation Sans,sans-serif" font-size="5.2" fill="#eee" text-anchor="middle">C</text><path d="M130 228.8l67.5 22.5v44.6H147L130 273.6z" fill="#ffa800"/><path d="M123.80 229.00V295.20" stroke="#e4e4e4" stroke-width=".9" fill="none"/><path d="M123.80 229.00L124.90 232.60L122.70 232.60Z" fill="#f2f2f2"/><path d="M123.80 295.20L122.70 291.60L124.90 291.60Z" fill="#f2f2f2"/><path d="M121.00 229.00H128.60M121.00 295.20H128.60" stroke="#bdbdbd" stroke-width=".9" fill="none"/><path d="M202.80 252.00V295.20" stroke="#e4e4e4" stroke-width=".9" fill="none"/><path d="M202.80 252.00L203.90 255.60L201.70 255.60Z" fill="#f2f2f2"/><path d="M202.80 295.20L201.70 291.60L203.90 291.60Z" fill="#f2f2f2"/><path d="M199.00 252.00H205.60M199.00 295.20H205.60" stroke="#bdbdbd" stroke-width=".9" fill="none"/><path d="M130.40 303.40H197.40" stroke="#e4e4e4" stroke-width=".9" fill="none"/><path d="M130.40 303.40L134.00 302.30L134.00 304.50Z" fill="#f2f2f2"/><path d="M197.40 303.40L193.80 304.50L193.80 302.30Z" fill="#f2f2f2"/><path d="M130.40 277.00V306.90M197.40 298.00V306.90" stroke="#e4e4e4" stroke-width=".9" fill="none"/><path d="M130.6 265H147M147 263V292M133 273.2H160.6M155 274V295.6" stroke="#ffd98a" stroke-width=".9" fill="none"/><path d="M130.60 265.00L134.20 263.90L134.20 266.10Z" fill="#f2f2f2"/><path d="M147.00 265.00L143.40 266.10L143.40 263.90Z" fill="#f2f2f2"/><path d="M155.00 274.00L156.10 277.60L153.90 277.60Z" fill="#f2f2f2"/><path d="M155.00 295.60L153.90 292.00L156.10 292.00Z" fill="#f2f2f2"/><text x="121.00" y="264.40" font-family="Liberation Sans,sans-serif" font-size="5.2" fill="#eee" text-anchor="middle">B</text><text x="139.00" y="263.60" font-family="Liberation Sans,sans-serif" font-size="5.2" fill="#eee" text-anchor="middle">D</text><text x="157.60" y="287.00" font-family="Liberation Sans,sans-serif" font-size="5.2" fill="#eee" text-anchor="middle">E</text><text x="200.20" y="276.00" font-family="Liberation Sans,sans-serif" font-size="5.2" fill="#eee" text-anchor="middle">C</text><text x="162.20" y="309.00" font-family="Liberation Sans,sans-serif" font-size="5.2" fill="#eee" text-anchor="middle">A</text><path d="M268.2 226l23.2 22.8v46H222.2z" fill="#ffa800"/><path d="M268.2 231V254.5M268.6 252.2H291" stroke="#ffe3a6" stroke-width=".9" fill="none"/><path d="M268.80 252.20L272.40 251.10L272.40 253.30Z" fill="#f2f2f2"/><path d="M291.00 252.20L287.40 253.30L287.40 251.10Z" fill="#f2f2f2"/><path d="M304.40 226.40V294.40" stroke="#e4e4e4" stroke-width=".9" fill="none"/><path d="M304.40 226.40L305.50 230.00L303.30 230.00Z" fill="#f2f2f2"/><path d="M304.40 294.40L303.30 290.80L305.50 290.80Z" fill="#f2f2f2"/><path d="M273.60 226.40H306.60M273.60 294.40H306.60" stroke="#bdbdbd" stroke-width=".9" fill="none"/><path d="M296.00 249.60V294.40" stroke="#e4e4e4" stroke-width=".9" fill="none"/><path d="M296.00 249.60L297.10 253.20L294.90 253.20Z" fill="#f2f2f2"/><path d="M296.00 294.40L294.90 290.80L297.10 290.80Z" fill="#f2f2f2"/><path d="M292.40 249.60H299.60M292.40 294.40H299.60" stroke="#bdbdbd" stroke-width=".9" fill="none"/><path d="M222.60 301.80H290.60" stroke="#e4e4e4" stroke-width=".9" fill="none"/><path d="M222.60 301.80L226.20 300.70L226.20 302.90Z" fill="#f2f2f2"/><path d="M290.60 301.80L287.00 302.90L287.00 300.70Z" fill="#f2f2f2"/><path d="M222.60 297.00V305.30M290.60 297.00V305.30" stroke="#e4e4e4" stroke-width=".9" fill="none"/><text x="280.00" y="258.60" font-family="Liberation Sans,sans-serif" font-size="5.2" fill="#eee" text-anchor="middle">D</text><text x="306.40" y="260.00" font-family="Liberation Sans,sans-serif" font-size="5.2" fill="#eee" text-anchor="middle">B</text><text x="298.60" y="273.00" font-family="Liberation Sans,sans-serif" font-size="5.2" fill="#eee" text-anchor="middle">C</text><text x="257.40" y="307.40" font-family="Liberation Sans,sans-serif" font-size="5.2" fill="#eee" text-anchor="middle">A</text><path d="M366 228.8h22.8l22.8 22.7V297H343v-45.5z" fill="#ffa800"/><path d="M366 234V256.6M388.4 234V256.6M343.6 254.8H366M388.4 254.8H411" stroke="#ffe3a6" stroke-width=".9" fill="none"/><path d="M343.60 254.80L347.20 253.70L347.20 255.90Z" fill="#f2f2f2"/><path d="M366.00 254.80L362.40 255.90L362.40 253.70Z" fill="#f2f2f2"/><path d="M388.60 254.80L392.20 253.70L392.20 255.90Z" fill="#f2f2f2"/><path d="M411.00 254.80L407.40 255.90L407.40 253.70Z" fill="#f2f2f2"/><path d="M330.20 229.00V296.00" stroke="#e4e4e4" stroke-width=".9" fill="none"/><path d="M330.20 229.00L331.30 232.60L329.10 232.60Z" fill="#f2f2f2"/><path d="M330.20 296.00L329.10 292.40L331.30 292.40Z" fill="#f2f2f2"/><path d="M327.60 229.00H360.60M327.60 296.00H360.60" stroke="#bdbdbd" stroke-width=".9" fill="none"/><path d="M338.00 252.40V296.00" stroke="#e4e4e4" stroke-width=".9" fill="none"/><path d="M338.00 252.40L339.10 256.00L336.90 256.00Z" fill="#f2f2f2"/><path d="M338.00 296.00L336.90 292.40L339.10 292.40Z" fill="#f2f2f2"/><path d="M335.00 252.40H341.40M335.00 296.00H341.40" stroke="#bdbdbd" stroke-width=".9" fill="none"/><path d="M343.40 304.00H411.20" stroke="#e4e4e4" stroke-width=".9" fill="none"/><path d="M343.40 304.00L347.00 302.90L347.00 305.10Z" fill="#f2f2f2"/><path d="M411.20 304.00L407.60 305.10L407.60 302.90Z" fill="#f2f2f2"/><path d="M343.40 299.00V307.50M411.20 299.00V307.50" stroke="#e4e4e4" stroke-width=".9" fill="none"/><text x="354.60" y="261.00" font-family="Liberation Sans,sans-serif" font-size="5.2" fill="#eee" text-anchor="middle">D</text><text x="400.00" y="261.00" font-family="Liberation Sans,sans-serif" font-size="5.2" fill="#eee" text-anchor="middle">E</text><text x="327.20" y="265.00" font-family="Liberation Sans,sans-serif" font-size="5.2" fill="#eee" text-anchor="middle">B</text><text x="334.60" y="276.40" font-family="Liberation Sans,sans-serif" font-size="5.2" fill="#eee" text-anchor="middle">C</text><text x="377.00" y="309.60" font-family="Liberation Sans,sans-serif" font-size="5.2" fill="#eee" text-anchor="middle">A</text><path d="M469.4 227.8l45.4 22.5v46H446.2v-46z" fill="#ffa800"/><path d="M469.4 233V256M446.8 254H469" stroke="#ffe3a6" stroke-width=".9" fill="none"/><path d="M446.80 254.00L450.40 252.90L450.40 255.10Z" fill="#f2f2f2"/><path d="M469.00 254.00L465.40 255.10L465.40 252.90Z" fill="#f2f2f2"/><path d="M433.20 228.40V295.00" stroke="#e4e4e4" stroke-width=".9" fill="none"/><path d="M433.20 228.40L434.30 232.00L432.10 232.00Z" fill="#f2f2f2"/><path d="M433.20 295.00L432.10 291.40L434.30 291.40Z" fill="#f2f2f2"/><path d="M431.60 228.40H464.00M431.60 295.00H464.00" stroke="#bdbdbd" stroke-width=".9" fill="none"/><path d="M441.20 251.40V295.00" stroke="#e4e4e4" stroke-width=".9" fill="none"/><path d="M441.20 251.40L442.30 255.00L440.10 255.00Z" fill="#f2f2f2"/><path d="M441.20 295.00L440.10 291.40L442.30 291.40Z" fill="#f2f2f2"/><path d="M438.00 251.40H444.60M438.00 295.00H444.60" stroke="#bdbdbd" stroke-width=".9" fill="none"/><path d="M446.40 303.00H514.40" stroke="#e4e4e4" stroke-width=".9" fill="none"/><path d="M446.40 303.00L450.00 301.90L450.00 304.10Z" fill="#f2f2f2"/><path d="M514.40 303.00L510.80 304.10L510.80 301.90Z" fill="#f2f2f2"/><path d="M446.40 298.00V306.50M514.40 298.00V306.50" stroke="#e4e4e4" stroke-width=".9" fill="none"/><text x="457.80" y="260.40" font-family="Liberation Sans,sans-serif" font-size="5.2" fill="#eee" text-anchor="middle">D</text><text x="430.20" y="264.20" font-family="Liberation Sans,sans-serif" font-size="5.2" fill="#eee" text-anchor="middle">B</text><text x="437.60" y="276.00" font-family="Liberation Sans,sans-serif" font-size="5.2" fill="#eee" text-anchor="middle">C</text><text x="481.00" y="309.20" font-family="Liberation Sans,sans-serif" font-size="5.2" fill="#eee" text-anchor="middle">A</text><path d="M29 341h27v33.6h33.8v26.3H29z" fill="#ffa800"/><path d="M19.40 341.60V400.00" stroke="#e4e4e4" stroke-width=".9" fill="none"/><path d="M19.40 341.60L20.50 345.20L18.30 345.20Z" fill="#f2f2f2"/><path d="M19.40 400.00L18.30 396.40L20.50 396.40Z" fill="#f2f2f2"/><path d="M16.40 341.60H27.00M16.40 400.00H27.00" stroke="#bdbdbd" stroke-width=".9" fill="none"/><path d="M96.60 375.40V400.40" stroke="#e4e4e4" stroke-width=".9" fill="none"/><path d="M96.60 375.40L97.70 379.00L95.50 379.00Z" fill="#f2f2f2"/><path d="M96.60 400.40L95.50 396.80L97.70 396.80Z" fill="#f2f2f2"/><path d="M91.00 375.40H101.00M91.00 400.40H101.00" stroke="#bdbdbd" stroke-width=".9" fill="none"/><path d="M29.40 408.80H89.40" stroke="#e4e4e4" stroke-width=".9" fill="none"/><path d="M29.40 408.80L33.00 407.70L33.00 409.90Z" fill="#f2f2f2"/><path d="M89.40 408.80L85.80 409.90L85.80 407.70Z" fill="#f2f2f2"/><path d="M29.40 402.00V412.30M89.40 402.00V412.30" stroke="#e4e4e4" stroke-width=".9" fill="none"/><path d="M29.40 334.80H56.00" stroke="#e4e4e4" stroke-width=".9" fill="none"/><path d="M29.40 334.80L33.00 333.70L33.00 335.90Z" fill="#f2f2f2"/><path d="M56.00 334.80L52.40 335.90L52.40 333.70Z" fill="#f2f2f2"/><path d="M29.40 330.40V338.30M56.00 330.40V338.30" stroke="#e4e4e4" stroke-width=".9" fill="none"/><text x="42.80" y="333.00" font-family="Liberation Sans,sans-serif" font-size="5.2" fill="#eee" text-anchor="middle">C</text><text x="23.00" y="372.40" font-family="Liberation Sans,sans-serif" font-size="5.2" fill="#eee" text-anchor="middle">B</text><text x="100.40" y="390.20" font-family="Liberation Sans,sans-serif" font-size="5.2" fill="#eee" text-anchor="middle">D</text><text x="59.80" y="407.00" font-family="Liberation Sans,sans-serif" font-size="5.2" fill="#eee" text-anchor="middle">A</text><path d="M131.9 340.6h27.5l34 34v26.3h-61.5z" fill="#ffa800"/><path d="M122.40 341.00V400.00" stroke="#e4e4e4" stroke-width=".9" fill="none"/><path d="M122.40 341.00L123.50 344.60L121.30 344.60Z" fill="#f2f2f2"/><path d="M122.40 400.00L121.30 396.40L123.50 396.40Z" fill="#f2f2f2"/><path d="M119.40 341.00H130.00M119.40 400.00H130.00" stroke="#bdbdbd" stroke-width=".9" fill="none"/><path d="M200.20 375.40V400.40" stroke="#e4e4e4" stroke-width=".9" fill="none"/><path d="M200.20 375.40L201.30 379.00L199.10 379.00Z" fill="#f2f2f2"/><path d="M200.20 400.40L199.10 396.80L201.30 396.80Z" fill="#f2f2f2"/><path d="M194.60 375.40H204.60M194.60 400.40H204.60" stroke="#bdbdbd" stroke-width=".9" fill="none"/><path d="M132.20 409.00H193.20" stroke="#e4e4e4" stroke-width=".9" fill="none"/><path d="M132.20 409.00L135.80 407.90L135.80 410.10Z" fill="#f2f2f2"/><path d="M193.20 409.00L189.60 410.10L189.60 407.90Z" fill="#f2f2f2"/><path d="M132.20 402.00V412.50M193.20 402.00V412.50" stroke="#e4e4e4" stroke-width=".9" fill="none"/><path d="M132.20 334.40H159.40" stroke="#e4e4e4" stroke-width=".9" fill="none"/><path d="M132.20 334.40L135.80 333.30L135.80 335.50Z" fill="#f2f2f2"/><path d="M159.40 334.40L155.80 335.50L155.80 333.30Z" fill="#f2f2f2"/><path d="M132.20 330.00V337.90M159.40 330.00V337.90" stroke="#e4e4e4" stroke-width=".9" fill="none"/><text x="145.20" y="333.00" font-family="Liberation Sans,sans-serif" font-size="5.2" fill="#eee" text-anchor="middle">C</text><text x="126.00" y="372.40" font-family="Liberation Sans,sans-serif" font-size="5.2" fill="#eee" text-anchor="middle">B</text><text x="203.60" y="390.20" font-family="Liberation Sans,sans-serif" font-size="5.2" fill="#eee" text-anchor="middle">D</text><text x="162.60" y="407.00" font-family="Liberation Sans,sans-serif" font-size="5.2" fill="#eee" text-anchor="middle">A</text><path d="M244.4 341.9h18.1l34 33.7V393l-9 9.5h-43.1L235 393v-42.4z" fill="#ffa800"/><path d="M225.40 342.40V401.60" stroke="#e4e4e4" stroke-width=".9" fill="none"/><path d="M225.40 342.40L226.50 346.00L224.30 346.00Z" fill="#f2f2f2"/><path d="M225.40 401.60L224.30 398.00L226.50 398.00Z" fill="#f2f2f2"/><path d="M222.40 342.40H241.00M222.40 401.60H241.00" stroke="#bdbdbd" stroke-width=".9" fill="none"/><path d="M303.40 376.60V401.80" stroke="#e4e4e4" stroke-width=".9" fill="none"/><path d="M303.40 376.60L304.50 380.20L302.30 380.20Z" fill="#f2f2f2"/><path d="M303.40 401.80L302.30 398.20L304.50 398.20Z" fill="#f2f2f2"/><path d="M297.60 376.60H307.60M297.60 401.80H307.60" stroke="#bdbdbd" stroke-width=".9" fill="none"/><path d="M235.40 410.40H296.20" stroke="#e4e4e4" stroke-width=".9" fill="none"/><path d="M235.40 410.40L239.00 409.30L239.00 411.50Z" fill="#f2f2f2"/><path d="M296.20 410.40L292.60 411.50L292.60 409.30Z" fill="#f2f2f2"/><path d="M235.40 397.00V413.90M296.20 397.00V413.90" stroke="#e4e4e4" stroke-width=".9" fill="none"/><path d="M235.40 335.60H262.00" stroke="#e4e4e4" stroke-width=".9" fill="none"/><path d="M235.40 335.60L239.00 334.50L239.00 336.70Z" fill="#f2f2f2"/><path d="M262.00 335.60L258.40 336.70L258.40 334.50Z" fill="#f2f2f2"/><path d="M235.40 331.00V339.10M262.00 331.00V339.10" stroke="#e4e4e4" stroke-width=".9" fill="none"/><path d="M235 350.6H249M244.2 343V356M235 393.2H249M244.2 388V402M282 393.2H296M287.4 388V402" stroke="#fff3d6" stroke-width=".9" fill="none"/><text x="248.20" y="335.00" font-family="Liberation Sans,sans-serif" font-size="5.2" fill="#eee" text-anchor="middle">C</text><text x="228.80" y="376.60" font-family="Liberation Sans,sans-serif" font-size="5.2" fill="#eee" text-anchor="middle">B</text><text x="306.60" y="391.00" font-family="Liberation Sans,sans-serif" font-size="5.2" fill="#eee" text-anchor="middle">D</text><text x="266.00" y="408.60" font-family="Liberation Sans,sans-serif" font-size="5.2" fill="#eee" text-anchor="middle">A</text><text x="247.00" y="348.20" font-family="Liberation Sans,sans-serif" font-size="4.6" fill="#ffefc8" text-anchor="middle">y</text><text x="238.80" y="356.00" font-family="Liberation Sans,sans-serif" font-size="4.6" fill="#ffefc8" text-anchor="middle">x</text><text x="248.80" y="357.60" font-family="Liberation Sans,sans-serif" font-size="5.0" fill="#ffefc8" text-anchor="middle">F3</text><text x="239.00" y="391.00" font-family="Liberation Sans,sans-serif" font-size="4.6" fill="#ffefc8" text-anchor="middle">x</text><text x="249.00" y="391.60" font-family="Liberation Sans,sans-serif" font-size="5.0" fill="#ffefc8" text-anchor="middle">F2</text><text x="247.20" y="400.00" font-family="Liberation Sans,sans-serif" font-size="4.6" fill="#ffefc8" text-anchor="middle">y</text><text x="280.40" y="391.00" font-family="Liberation Sans,sans-serif" font-size="5.0" fill="#ffefc8" text-anchor="middle">F1</text><text x="291.40" y="391.60" font-family="Liberation Sans,sans-serif" font-size="4.6" fill="#ffefc8" text-anchor="middle">x</text><text x="283.00" y="400.00" font-family="Liberation Sans,sans-serif" font-size="4.6" fill="#ffefc8" text-anchor="middle">y</text><path d="M337.3 341h27.4L399 375v27h-41.7a20 20 0 0 1-20-20z" fill="#ffa800"/><circle cx="358.8" cy="380.4" r="21.4" stroke="#ffe9b8" stroke-width=".9" fill="none" stroke-dasharray="3 2.4"/><path d="M358.8 372V389M351 380.4H367M358.8 380.4L344.2 395.6" stroke="#ffe9b8" stroke-width=".9" fill="none" stroke-dasharray="2 1.4"/><path d="M344.00 395.80L345.70 392.16L347.57 393.96Z" fill="#f2f2f2"/><path d="M328.00 341.60V401.00" stroke="#e4e4e4" stroke-width=".9" fill="none"/><path d="M328.00 341.60L329.10 345.20L326.90 345.20Z" fill="#f2f2f2"/><path d="M328.00 401.00L326.90 397.40L329.10 397.40Z" fill="#f2f2f2"/><path d="M325.00 341.60H335.00M325.00 401.00H335.00" stroke="#bdbdbd" stroke-width=".9" fill="none"/><path d="M406.00 376.00V401.40" stroke="#e4e4e4" stroke-width=".9" fill="none"/><path d="M406.00 376.00L407.10 379.60L404.90 379.60Z" fill="#f2f2f2"/><path d="M406.00 401.40L404.90 397.80L407.10 397.80Z" fill="#f2f2f2"/><path d="M400.00 376.00H410.40M400.00 401.40H410.40" stroke="#bdbdbd" stroke-width=".9" fill="none"/><path d="M337.60 410.00H398.60" stroke="#e4e4e4" stroke-width=".9" fill="none"/><path d="M337.60 410.00L341.20 408.90L341.20 411.10Z" fill="#f2f2f2"/><path d="M398.60 410.00L395.00 411.10L395.00 408.90Z" fill="#f2f2f2"/><path d="M337.60 388.00V413.50M398.60 403.00V413.50" stroke="#e4e4e4" stroke-width=".9" fill="none"/><path d="M337.60 335.00H364.60" stroke="#e4e4e4" stroke-width=".9" fill="none"/><path d="M337.60 335.00L341.20 333.90L341.20 336.10Z" fill="#f2f2f2"/><path d="M364.60 335.00L361.00 336.10L361.00 333.90Z" fill="#f2f2f2"/><path d="M337.60 330.60V338.50M364.60 330.60V338.50" stroke="#e4e4e4" stroke-width=".9" fill="none"/><text x="351.00" y="334.00" font-family="Liberation Sans,sans-serif" font-size="5.2" fill="#eee" text-anchor="middle">C</text><text x="331.40" y="373.00" font-family="Liberation Sans,sans-serif" font-size="5.2" fill="#eee" text-anchor="middle">B</text><text x="409.60" y="391.60" font-family="Liberation Sans,sans-serif" font-size="5.2" fill="#eee" text-anchor="middle">D</text><text x="367.60" y="408.80" font-family="Liberation Sans,sans-serif" font-size="5.2" fill="#eee" text-anchor="middle">A</text><text x="354.40" y="393.00" font-family="Liberation Sans,sans-serif" font-size="5.2" fill="#ffefc8" text-anchor="middle">E</text><path d="M441 340.6h27.5l34 34v26.6h-40.6a21 21 0 0 0-20.9-21z" fill="#ffa800"/><path d="M441.4 382V412M441.4 401.2H459M441.4 401.2L456 387" stroke="#e4e4e4" stroke-width=".9" fill="none"/><path d="M456.40 386.60L454.58 390.18L452.77 388.32Z" fill="#f2f2f2"/><path d="M431.20 341.00V400.60" stroke="#e4e4e4" stroke-width=".9" fill="none"/><path d="M431.20 341.00L432.30 344.60L430.10 344.60Z" fill="#f2f2f2"/><path d="M431.20 400.60L430.10 397.00L432.30 397.00Z" fill="#f2f2f2"/><path d="M428.20 341.00H438.60M428.20 400.60H438.60" stroke="#bdbdbd" stroke-width=".9" fill="none"/><path d="M509.40 375.40V400.80" stroke="#e4e4e4" stroke-width=".9" fill="none"/><path d="M509.40 375.40L510.50 379.00L508.30 379.00Z" fill="#f2f2f2"/><path d="M509.40 400.80L508.30 397.20L510.50 397.20Z" fill="#f2f2f2"/><path d="M503.60 375.40H513.60M503.60 400.80H513.60" stroke="#bdbdbd" stroke-width=".9" fill="none"/><path d="M441.40 409.40H502.40" stroke="#e4e4e4" stroke-width=".9" fill="none"/><path d="M441.40 409.40L445.00 408.30L445.00 410.50Z" fill="#f2f2f2"/><path d="M502.40 409.40L498.80 410.50L498.80 408.30Z" fill="#f2f2f2"/><path d="M441.40 405.00V412.90M502.40 405.00V412.90" stroke="#e4e4e4" stroke-width=".9" fill="none"/><path d="M441.40 334.40H468.40" stroke="#e4e4e4" stroke-width=".9" fill="none"/><path d="M441.40 334.40L445.00 333.30L445.00 335.50Z" fill="#f2f2f2"/><path d="M468.40 334.40L464.80 335.50L464.80 333.30Z" fill="#f2f2f2"/><path d="M441.40 330.00V337.90M468.40 330.00V337.90" stroke="#e4e4e4" stroke-width=".9" fill="none"/><text x="454.20" y="333.40" font-family="Liberation Sans,sans-serif" font-size="5.2" fill="#eee" text-anchor="middle">C</text><text x="434.60" y="375.40" font-family="Liberation Sans,sans-serif" font-size="5.2" fill="#eee" text-anchor="middle">B</text><text x="512.60" y="390.00" font-family="Liberation Sans,sans-serif" font-size="5.2" fill="#eee" text-anchor="middle">D</text><text x="472.00" y="407.40" font-family="Liberation Sans,sans-serif" font-size="5.2" fill="#eee" text-anchor="middle">A</text><text x="446.00" y="393.40" font-family="Liberation Sans,sans-serif" font-size="5.2" fill="#eee" text-anchor="middle">E</text><rect x="10.00" y="113.10" width="34.9" height="5.3" fill="#f00"/><text x="11.60" y="117.30" font-family="Liberation Sans,sans-serif" font-size="4.1" font-weight="700" fill="#fff" textLength="29.6" lengthAdjust="spacingAndGlyphs" opacity=".9">TEMPLATE No. 016</text><rect x="112.90" y="113.10" width="34.9" height="5.3" fill="#f00"/><text x="114.50" y="117.30" font-family="Liberation Sans,sans-serif" font-size="4.1" font-weight="700" fill="#fff" textLength="29.6" lengthAdjust="spacingAndGlyphs" opacity=".9">TEMPLATE No. 017</text><rect x="215.80" y="113.10" width="34.9" height="5.3" fill="#f00"/><text x="217.40" y="117.30" font-family="Liberation Sans,sans-serif" font-size="4.1" font-weight="700" fill="#fff" textLength="29.6" lengthAdjust="spacingAndGlyphs" opacity=".9">TEMPLATE No. 018</text><rect x="318.70" y="113.10" width="34.9" height="5.3" fill="#f00"/><text x="320.30" y="117.30" font-family="Liberation Sans,sans-serif" font-size="4.1" font-weight="700" fill="#fff" textLength="29.6" lengthAdjust="spacingAndGlyphs" opacity=".9">TEMPLATE No. 019</text><rect x="421.90" y="113.10" width="34.9" height="5.3" fill="#f00"/><text x="423.50" y="117.30" font-family="Liberation Sans,sans-serif" font-size="4.1" font-weight="700" fill="#fff" textLength="29.6" lengthAdjust="spacingAndGlyphs" opacity=".9">TEMPLATE No. 020</text><rect x="10.00" y="216.30" width="34.9" height="5.3" fill="#f00"/><text x="11.60" y="220.50" font-family="Liberation Sans,sans-serif" font-size="4.1" font-weight="700" fill="#fff" textLength="29.6" lengthAdjust="spacingAndGlyphs" opacity=".9">TEMPLATE No. 021</text><rect x="112.90" y="216.30" width="34.9" height="5.3" fill="#f00"/><text x="114.50" y="220.50" font-family="Liberation Sans,sans-serif" font-size="4.1" font-weight="700" fill="#fff" textLength="29.6" lengthAdjust="spacingAndGlyphs" opacity=".9">TEMPLATE No. 022</text><rect x="215.80" y="216.30" width="34.9" height="5.3" fill="#f00"/><text x="217.40" y="220.50" font-family="Liberation Sans,sans-serif" font-size="4.1" font-weight="700" fill="#fff" textLength="29.6" lengthAdjust="spacingAndGlyphs" opacity=".9">TEMPLATE No. 023</text><rect x="318.70" y="216.30" width="34.9" height="5.3" fill="#f00"/><text x="320.30" y="220.50" font-family="Liberation Sans,sans-serif" font-size="4.1" font-weight="700" fill="#fff" textLength="29.6" lengthAdjust="spacingAndGlyphs" opacity=".9">TEMPLATE No. 024</text><rect x="421.90" y="216.30" width="34.9" height="5.3" fill="#f00"/><text x="423.50" y="220.50" font-family="Liberation Sans,sans-serif" font-size="4.1" font-weight="700" fill="#fff" textLength="29.6" lengthAdjust="spacingAndGlyphs" opacity=".9">TEMPLATE No. 025</text><rect x="10.00" y="319.00" width="34.9" height="5.3" fill="#f00"/><text x="11.60" y="323.20" font-family="Liberation Sans,sans-serif" font-size="4.1" font-weight="700" fill="#fff" textLength="29.6" lengthAdjust="spacingAndGlyphs" opacity=".9">TEMPLATE No. 026</text><rect x="112.90" y="319.00" width="34.9" height="5.3" fill="#f00"/><text x="114.50" y="323.20" font-family="Liberation Sans,sans-serif" font-size="4.1" font-weight="700" fill="#fff" textLength="29.6" lengthAdjust="spacingAndGlyphs" opacity=".9">TEMPLATE No. 027</text><rect x="215.80" y="319.00" width="34.9" height="5.3" fill="#f00"/><text x="217.40" y="323.20" font-family="Liberation Sans,sans-serif" font-size="4.1" font-weight="700" fill="#fff" textLength="29.6" lengthAdjust="spacingAndGlyphs" opacity=".9">TEMPLATE No. 028</text><rect x="318.70" y="319.00" width="34.9" height="5.3" fill="#f00"/><text x="320.30" y="323.20" font-family="Liberation Sans,sans-serif" font-size="4.1" font-weight="700" fill="#fff" textLength="29.6" lengthAdjust="spacingAndGlyphs" opacity=".9">TEMPLATE No. 029</text><rect x="421.90" y="319.00" width="34.9" height="5.3" fill="#f00"/><text x="423.50" y="323.20" font-family="Liberation Sans,sans-serif" font-size="4.1" font-weight="700" fill="#fff" textLength="29.6" lengthAdjust="spacingAndGlyphs" opacity=".9">TEMPLATE No. 030</text><path d="M110.5 111V418M213.4 111V418M316.3 111V418M419.2 111V418M8 213.5H518M8 316.3H518" stroke="#ffff00" stroke-width="1.1" fill="none"/></svg></div>
<div style="position:absolute;left:594.00px;top:164.70px;width:969.00px;height:795.30px;background:#fdfdfd;"></div>
<div style="position:absolute;left:1560.00px;top:959.00px;width:3.00px;height:16.00px;background:#fdfdfd;"></div>
<div style="position:absolute;left:594px;top:165px;width:969px;height:795px;overflow:hidden"><svg style="position:absolute;left:0;top:0" width="969" height="795" viewBox="594 165 969 795"><path d="M629.5 165V960M682.5 165V960M735.5 165V960M788.5 165V960M841.5 165V960M894.5 165V960M947.5 165V960M1000.5 165V960M1053.5 165V960M1106.5 165V960M1159.5 165V960M1212.5 165V960M1265.5 165V960M1318.5 165V960M1371.5 165V960M1424.5 165V960M1477.5 165V960M1530.5 165V960M594 931.5H1563M594 878.5H1563M594 825.5H1563M594 772.5H1563M594 719.5H1563M594 666.5H1563M594 613.5H1563M594 560.5H1563M594 507.5H1563M594 454.5H1563M594 401.5H1563M594 348.5H1563M594 295.5H1563M594 243.5H1563M594 190.5H1563" stroke="#efefef" stroke-width="1" fill="none"/><g fill="#8e8e8e"><rect x="629.0" y="931.0" width="1" height="1"/><rect x="629.0" y="878.0" width="1" height="1"/><rect x="629.0" y="825.0" width="1" height="1"/><rect x="629.0" y="772.0" width="1" height="1"/><rect x="629.0" y="719.0" width="1" height="1"/><rect x="629.0" y="666.0" width="1" height="1"/><rect x="629.0" y="613.0" width="1" height="1"/><rect x="629.0" y="560.0" width="1" height="1"/><rect x="629.0" y="507.0" width="1" height="1"/><rect x="629.0" y="454.0" width="1" height="1"/><rect x="629.0" y="401.0" width="1" height="1"/><rect x="629.0" y="348.0" width="1" height="1"/><rect x="629.0" y="295.0" width="1" height="1"/><rect x="629.0" y="243.0" width="1" height="1"/><rect x="629.0" y="190.0" width="1" height="1"/><rect x="682.0" y="931.0" width="1" height="1"/><rect x="682.0" y="878.0" width="1" height="1"/><rect x="682.0" y="825.0" width="1" height="1"/><rect x="682.0" y="772.0" width="1" height="1"/><rect x="682.0" y="719.0" width="1" height="1"/><rect x="682.0" y="666.0" width="1" height="1"/><rect x="682.0" y="613.0" width="1" height="1"/><rect x="682.0" y="560.0" width="1" height="1"/><rect x="682.0" y="507.0" width="1" height="1"/><rect x="682.0" y="454.0" width="1" height="1"/><rect x="682.0" y="401.0" width="1" height="1"/><rect x="682.0" y="348.0" width="1" height="1"/><rect x="682.0" y="295.0" width="1" height="1"/><rect x="682.0" y="243.0" width="1" height="1"/><rect x="682.0" y="190.0" width="1" height="1"/><rect x="735.0" y="931.0" width="1" height="1"/><rect x="735.0" y="878.0" width="1" height="1"/><rect x="735.0" y="825.0" width="1" height="1"/><rect x="735.0" y="772.0" width="1" height="1"/><rect x="735.0" y="719.0" width="1" height="1"/><rect x="735.0" y="666.0" width="1" height="1"/><rect x="735.0" y="613.0" width="1" height="1"/><rect x="735.0" y="560.0" width="1" height="1"/><rect x="735.0" y="507.0" width="1" height="1"/><rect x="735.0" y="454.0" width="1" height="1"/><rect x="735.0" y="401.0" width="1" height="1"/><rect x="735.0" y="348.0" width="1" height="1"/><rect x="735.0" y="295.0" width="1" height="1"/><rect x="735.0" y="243.0" width="1" height="1"/><rect x="735.0" y="190.0" width="1" height="1"/><rect x="788.0" y="931.0" width="1" height="1"/><rect x="788.0" y="878.0" width="1" height="1"/><rect x="788.0" y="825.0" width="1" height="1"/><rect x="788.0" y="772.0" width="1" height="1"/><rect x="788.0" y="719.0" width="1" height="1"/><rect x="788.0" y="666.0" width="1" height="1"/><rect x="788.0" y="613.0" width="1" height="1"/><rect x="788.0" y="560.0" width="1" height="1"/><rect x="788.0" y="507.0" width="1" height="1"/><rect x="788.0" y="454.0" width="1" height="1"/><rect x="788.0" y="401.0" width="1" height="1"/><rect x="788.0" y="348.0" width="1" height="1"/><rect x="788.0" y="295.0" width="1" height="1"/><rect x="788.0" y="243.0" width="1" height="1"/><rect x="788.0" y="190.0" width="1" height="1"/><rect x="841.0" y="931.0" width="1" height="1"/><rect x="841.0" y="878.0" width="1" height="1"/><rect x="841.0" y="825.0" width="1" height="1"/><rect x="841.0" y="772.0" width="1" height="1"/><rect x="841.0" y="719.0" width="1" height="1"/><rect x="841.0" y="666.0" width="1" height="1"/><rect x="841.0" y="613.0" width="1" height="1"/><rect x="841.0" y="560.0" width="1" height="1"/><rect x="841.0" y="507.0" width="1" height="1"/><rect x="841.0" y="454.0" width="1" height="1"/><rect x="841.0" y="401.0" width="1" height="1"/><rect x="841.0" y="348.0" width="1" height="1"/><rect x="841.0" y="295.0" width="1" height="1"/><rect x="841.0" y="243.0" width="1" height="1"/><rect x="841.0" y="190.0" width="1" height="1"/><rect x="894.0" y="931.0" width="1" height="1"/><rect x="894.0" y="878.0" width="1" height="1"/><rect x="894.0" y="825.0" width="1" height="1"/><rect x="894.0" y="772.0" width="1" height="1"/><rect x="894.0" y="719.0" width="1" height="1"/><rect x="894.0" y="666.0" width="1" height="1"/><rect x="894.0" y="613.0" width="1" height="1"/><rect x="894.0" y="560.0" width="1" height="1"/><rect x="894.0" y="507.0" width="1" height="1"/><rect x="894.0" y="454.0" width="1" height="1"/><rect x="894.0" y="401.0" width="1" height="1"/><rect x="894.0" y="348.0" width="1" height="1"/><rect x="894.0" y="295.0" width="1" height="1"/><rect x="894.0" y="243.0" width="1" height="1"/><rect x="894.0" y="190.0" width="1" height="1"/><rect x="947.0" y="931.0" width="1" height="1"/><rect x="947.0" y="878.0" width="1" height="1"/><rect x="947.0" y="825.0" width="1" height="1"/><rect x="947.0" y="772.0" width="1" height="1"/><rect x="947.0" y="719.0" width="1" height="1"/><rect x="947.0" y="666.0" width="1" height="1"/><rect x="947.0" y="613.0" width="1" height="1"/><rect x="947.0" y="560.0" width="1" height="1"/><rect x="947.0" y="507.0" width="1" height="1"/><rect x="947.0" y="454.0" width="1" height="1"/><rect x="947.0" y="401.0" width="1" height="1"/><rect x="947.0" y="348.0" width="1" height="1"/><rect x="947.0" y="295.0" width="1" height="1"/><rect x="947.0" y="243.0" width="1" height="1"/><rect x="947.0" y="190.0" width="1" height="1"/><rect x="1000.0" y="931.0" width="1" height="1"/><rect x="1000.0" y="878.0" width="1" height="1"/><rect x="1000.0" y="825.0" width="1" height="1"/><rect x="1000.0" y="772.0" width="1" height="1"/><rect x="1000.0" y="719.0" width="1" height="1"/><rect x="1000.0" y="666.0" width="1" height="1"/><rect x="1000.0" y="613.0" width="1" height="1"/><rect x="1000.0" y="560.0" width="1" height="1"/><rect x="1000.0" y="507.0" width="1" height="1"/><rect x="1000.0" y="454.0" width="1" height="1"/><rect x="1000.0" y="401.0" width="1" height="1"/><rect x="1000.0" y="348.0" width="1" height="1"/><rect x="1000.0" y="295.0" width="1" height="1"/><rect x="1000.0" y="243.0" width="1" height="1"/><rect x="1000.0" y="190.0" width="1" height="1"/><rect x="1053.0" y="931.0" width="1" height="1"/><rect x="1053.0" y="878.0" width="1" height="1"/><rect x="1053.0" y="825.0" width="1" height="1"/><rect x="1053.0" y="772.0" width="1" height="1"/><rect x="1053.0" y="719.0" width="1" height="1"/><rect x="1053.0" y="666.0" width="1" height="1"/><rect x="1053.0" y="613.0" width="1" height="1"/><rect x="1053.0" y="560.0" width="1" height="1"/><rect x="1053.0" y="507.0" width="1" height="1"/><rect x="1053.0" y="454.0" width="1" height="1"/><rect x="1053.0" y="401.0" width="1" height="1"/><rect x="1053.0" y="348.0" width="1" height="1"/><rect x="1053.0" y="295.0" width="1" height="1"/><rect x="1053.0" y="243.0" width="1" height="1"/><rect x="1053.0" y="190.0" width="1" height="1"/><rect x="1106.0" y="931.0" width="1" height="1"/><rect x="1106.0" y="878.0" width="1" height="1"/><rect x="1106.0" y="825.0" width="1" height="1"/><rect x="1106.0" y="772.0" width="1" height="1"/><rect x="1106.0" y="719.0" width="1" height="1"/><rect x="1106.0" y="666.0" width="1" height="1"/><rect x="1106.0" y="613.0" width="1" height="1"/><rect x="1106.0" y="560.0" width="1" height="1"/><rect x="1106.0" y="507.0" width="1" height="1"/><rect x="1106.0" y="454.0" width="1" height="1"/><rect x="1106.0" y="401.0" width="1" height="1"/><rect x="1106.0" y="348.0" width="1" height="1"/><rect x="1106.0" y="295.0" width="1" height="1"/><rect x="1106.0" y="243.0" width="1" height="1"/><rect x="1106.0" y="190.0" width="1" height="1"/><rect x="1159.0" y="931.0" width="1" height="1"/><rect x="1159.0" y="878.0" width="1" height="1"/><rect x="1159.0" y="825.0" width="1" height="1"/><rect x="1159.0" y="772.0" width="1" height="1"/><rect x="1159.0" y="719.0" width="1" height="1"/><rect x="1159.0" y="666.0" width="1" height="1"/><rect x="1159.0" y="613.0" width="1" height="1"/><rect x="1159.0" y="560.0" width="1" height="1"/><rect x="1159.0" y="507.0" width="1" height="1"/><rect x="1159.0" y="454.0" width="1" height="1"/><rect x="1159.0" y="401.0" width="1" height="1"/><rect x="1159.0" y="348.0" width="1" height="1"/><rect x="1159.0" y="295.0" width="1" height="1"/><rect x="1159.0" y="243.0" width="1" height="1"/><rect x="1159.0" y="190.0" width="1" height="1"/><rect x="1212.0" y="931.0" width="1" height="1"/><rect x="1212.0" y="878.0" width="1" height="1"/><rect x="1212.0" y="825.0" width="1" height="1"/><rect x="1212.0" y="772.0" width="1" height="1"/><rect x="1212.0" y="719.0" width="1" height="1"/><rect x="1212.0" y="666.0" width="1" height="1"/><rect x="1212.0" y="613.0" width="1" height="1"/><rect x="1212.0" y="560.0" width="1" height="1"/><rect x="1212.0" y="507.0" width="1" height="1"/><rect x="1212.0" y="454.0" width="1" height="1"/><rect x="1212.0" y="401.0" width="1" height="1"/><rect x="1212.0" y="348.0" width="1" height="1"/><rect x="1212.0" y="295.0" width="1" height="1"/><rect x="1212.0" y="243.0" width="1" height="1"/><rect x="1212.0" y="190.0" width="1" height="1"/><rect x="1265.0" y="931.0" width="1" height="1"/><rect x="1265.0" y="878.0" width="1" height="1"/><rect x="1265.0" y="825.0" width="1" height="1"/><rect x="1265.0" y="772.0" width="1" height="1"/><rect x="1265.0" y="719.0" width="1" height="1"/><rect x="1265.0" y="666.0" width="1" height="1"/><rect x="1265.0" y="613.0" width="1" height="1"/><rect x="1265.0" y="560.0" width="1" height="1"/><rect x="1265.0" y="507.0" width="1" height="1"/><rect x="1265.0" y="454.0" width="1" height="1"/><rect x="1265.0" y="401.0" width="1" height="1"/><rect x="1265.0" y="348.0" width="1" height="1"/><rect x="1265.0" y="295.0" width="1" height="1"/><rect x="1265.0" y="243.0" width="1" height="1"/><rect x="1265.0" y="190.0" width="1" height="1"/><rect x="1318.0" y="931.0" width="1" height="1"/><rect x="1318.0" y="878.0" width="1" height="1"/><rect x="1318.0" y="825.0" width="1" height="1"/><rect x="1318.0" y="772.0" width="1" height="1"/><rect x="1318.0" y="719.0" width="1" height="1"/><rect x="1318.0" y="666.0" width="1" height="1"/><rect x="1318.0" y="613.0" width="1" height="1"/><rect x="1318.0" y="560.0" width="1" height="1"/><rect x="1318.0" y="507.0" width="1" height="1"/><rect x="1318.0" y="454.0" width="1" height="1"/><rect x="1318.0" y="401.0" width="1" height="1"/><rect x="1318.0" y="348.0" width="1" height="1"/><rect x="1318.0" y="295.0" width="1" height="1"/><rect x="1318.0" y="243.0" width="1" height="1"/><rect x="1318.0" y="190.0" width="1" height="1"/><rect x="1371.0" y="931.0" width="1" height="1"/><rect x="1371.0" y="878.0" width="1" height="1"/><rect x="1371.0" y="825.0" width="1" height="1"/><rect x="1371.0" y="772.0" width="1" height="1"/><rect x="1371.0" y="719.0" width="1" height="1"/><rect x="1371.0" y="666.0" width="1" height="1"/><rect x="1371.0" y="613.0" width="1" height="1"/><rect x="1371.0" y="560.0" width="1" height="1"/><rect x="1371.0" y="507.0" width="1" height="1"/><rect x="1371.0" y="454.0" width="1" height="1"/><rect x="1371.0" y="401.0" width="1" height="1"/><rect x="1371.0" y="348.0" width="1" height="1"/><rect x="1371.0" y="295.0" width="1" height="1"/><rect x="1371.0" y="243.0" width="1" height="1"/><rect x="1371.0" y="190.0" width="1" height="1"/><rect x="1424.0" y="931.0" width="1" height="1"/><rect x="1424.0" y="878.0" width="1" height="1"/><rect x="1424.0" y="825.0" width="1" height="1"/><rect x="1424.0" y="772.0" width="1" height="1"/><rect x="1424.0" y="719.0" width="1" height="1"/><rect x="1424.0" y="666.0" width="1" height="1"/><rect x="1424.0" y="613.0" width="1" height="1"/><rect x="1424.0" y="560.0" width="1" height="1"/><rect x="1424.0" y="507.0" width="1" height="1"/><rect x="1424.0" y="454.0" width="1" height="1"/><rect x="1424.0" y="401.0" width="1" height="1"/><rect x="1424.0" y="348.0" width="1" height="1"/><rect x="1424.0" y="295.0" width="1" height="1"/><rect x="1424.0" y="243.0" width="1" height="1"/><rect x="1424.0" y="190.0" width="1" height="1"/><rect x="1477.0" y="931.0" width="1" height="1"/><rect x="1477.0" y="878.0" width="1" height="1"/><rect x="1477.0" y="825.0" width="1" height="1"/><rect x="1477.0" y="772.0" width="1" height="1"/><rect x="1477.0" y="719.0" width="1" height="1"/><rect x="1477.0" y="666.0" width="1" height="1"/><rect x="1477.0" y="613.0" width="1" height="1"/><rect x="1477.0" y="560.0" width="1" height="1"/><rect x="1477.0" y="507.0" width="1" height="1"/><rect x="1477.0" y="454.0" width="1" height="1"/><rect x="1477.0" y="401.0" width="1" height="1"/><rect x="1477.0" y="348.0" width="1" height="1"/><rect x="1477.0" y="295.0" width="1" height="1"/><rect x="1477.0" y="243.0" width="1" height="1"/><rect x="1477.0" y="190.0" width="1" height="1"/><rect x="1530.0" y="931.0" width="1" height="1"/><rect x="1530.0" y="878.0" width="1" height="1"/><rect x="1530.0" y="825.0" width="1" height="1"/><rect x="1530.0" y="772.0" width="1" height="1"/><rect x="1530.0" y="719.0" width="1" height="1"/><rect x="1530.0" y="666.0" width="1" height="1"/><rect x="1530.0" y="613.0" width="1" height="1"/><rect x="1530.0" y="560.0" width="1" height="1"/><rect x="1530.0" y="507.0" width="1" height="1"/><rect x="1530.0" y="454.0" width="1" height="1"/><rect x="1530.0" y="401.0" width="1" height="1"/><rect x="1530.0" y="348.0" width="1" height="1"/><rect x="1530.0" y="295.0" width="1" height="1"/><rect x="1530.0" y="243.0" width="1" height="1"/><rect x="1530.0" y="190.0" width="1" height="1"/></g><path d="M594 878.5H1563M894.5 165V960" stroke="#1010f0" stroke-width="1" fill="none"/><path d="M861 878.3H927.8M894.3 845V912" stroke="#f01010" stroke-width="3.2" fill="none"/><rect x="890" y="238" width="645" height="645" rx="68.1" fill="none" stroke="#000" stroke-width="4"/><rect x="894.5" y="242.5" width="636" height="636" rx="63.6" fill="none" stroke="#000" stroke-width="1.1"/><circle cx="1499.4" cy="884.4" r="2.1" fill="#000"/><path d="M1499.2 884q-.4-3.6-2.8-5.2" stroke="#000" stroke-width="1.3" fill="none"/><path d="M1489.6 880.4v4.4" stroke="#000" stroke-width="1.2"/><circle cx="974.00" cy="322.00" r="26.5" fill="none" stroke="#fa14c8" stroke-width="1"/><circle cx="974.00" cy="322.00" r="22.2" fill="none" stroke="#fa14c8" stroke-width="2.2"/><circle cx="974.30" cy="322.00" r="2.5" fill="#fa14c8"/><path d="M974.20 321.80C966.00 322.40 961.40 328.00 962.70 333.50C963.60 337.50 966.00 340.80 969.40 343.20" fill="none" stroke="#fa14c8" stroke-width="1.9"/><path d="M973.60 332.80Q979.40 333.00 979.40 338.00Q979.40 341.80 976.80 343.60" fill="none" stroke="#fa14c8" stroke-width="1.6"/><circle cx="1451.00" cy="322.00" r="26.5" fill="none" stroke="#b40808" stroke-width="1"/><circle cx="1451.00" cy="322.00" r="22.2" fill="none" stroke="#b40808" stroke-width="2.2"/><circle cx="974.00" cy="799.00" r="26.5" fill="none" stroke="#ffb400" stroke-width="1"/><circle cx="974.00" cy="799.00" r="22.2" fill="none" stroke="#ffb400" stroke-width="2.2"/><circle cx="974.30" cy="799.00" r="2.5" fill="#ffb400"/><path d="M974.20 798.80C966.00 799.40 961.40 805.00 962.70 810.50C963.60 814.50 966.00 817.80 969.40 820.20" fill="none" stroke="#ffb400" stroke-width="1.9"/><path d="M973.60 809.80Q979.40 810.00 979.40 815.00Q979.40 818.80 976.80 820.60" fill="none" stroke="#ffb400" stroke-width="1.6"/><circle cx="1451.00" cy="799.00" r="26.5" fill="none" stroke="#000" stroke-width="1"/><circle cx="1451.00" cy="799.00" r="22.2" fill="none" stroke="#000" stroke-width="2.2"/><circle cx="1451.30" cy="799.00" r="2.5" fill="#000"/><path d="M1451.20 798.80C1443.00 799.40 1438.40 805.00 1439.70 810.50C1440.60 814.50 1443.00 817.80 1446.40 820.20" fill="none" stroke="#000" stroke-width="1.9"/><path d="M1450.60 809.80Q1456.40 810.00 1456.40 815.00Q1456.40 818.80 1453.80 820.60" fill="none" stroke="#000" stroke-width="1.6"/><circle cx="1212.5" cy="560.5" r="95.4" fill="none" stroke="#0cc40c" stroke-width="1"/><circle cx="1212.5" cy="560.5" r="90.8" fill="none" stroke="#0cc40c" stroke-width="2.2"/><circle cx="1207.4" cy="642.3" r="2.3" fill="#0cc40c"/><path d="M1207.4 642.3V651M1216 646.4V651" stroke="#0cc40c" stroke-width="1.6" fill="none"/></svg></div>
<div style="position:absolute;left:573.00px;top:164.70px;width:19.00px;height:794.30px;background:#b9b9b9;"></div>
<div style="position:absolute;left:592.00px;top:164.70px;width:2.00px;height:796.30px;background:#000;"></div>
<div style="position:absolute;left:570.00px;top:959.00px;width:24.00px;height:16.00px;background:#2f2f2f;"></div>
<div style="position:absolute;left:594.00px;top:959.60px;width:966.00px;height:1.40px;background:#000;"></div>
<div style="position:absolute;left:595.00px;top:961.00px;width:965.00px;height:14.00px;background:#b9b9b9;"></div>
<div style="position:absolute;left:572.00px;top:302.00px;width:22.00px;height:3.60px;background:#fff;"></div>
<svg style="position:absolute;left:570px;top:165px" width="993" height="810" viewBox="570 165 993 810"><path d="M582 242.3H592.5" stroke="#111" stroke-width="1.6"/><text transform="translate(588.2 240.3) rotate(-90) scale(.96 1)" font-family="Liberation Sans,sans-serif" font-size="16" fill="#1c1c1c">12</text><path d="M582 348.3H592.5" stroke="#111" stroke-width="1.6"/><text transform="translate(588.2 346.3) rotate(-90) scale(.96 1)" font-family="Liberation Sans,sans-serif" font-size="16" fill="#1c1c1c">10</text><path d="M582 454.3H592.5" stroke="#111" stroke-width="1.6"/><text transform="translate(588.2 452.3) rotate(-90) scale(.96 1)" font-family="Liberation Sans,sans-serif" font-size="16" fill="#1c1c1c">8</text><path d="M582 560.3H592.5" stroke="#111" stroke-width="1.6"/><text transform="translate(588.2 558.3) rotate(-90) scale(.96 1)" font-family="Liberation Sans,sans-serif" font-size="16" fill="#1c1c1c">6</text><path d="M582 666.3H592.5" stroke="#111" stroke-width="1.6"/><text transform="translate(588.2 664.3) rotate(-90) scale(.96 1)" font-family="Liberation Sans,sans-serif" font-size="16" fill="#1c1c1c">4</text><path d="M582 772.3H592.5" stroke="#111" stroke-width="1.6"/><text transform="translate(588.2 770.3) rotate(-90) scale(.96 1)" font-family="Liberation Sans,sans-serif" font-size="16" fill="#1c1c1c">2</text><path d="M582 878.3H592.5" stroke="#111" stroke-width="1.6"/><text transform="translate(588.2 876.3) rotate(-90) scale(.96 1)" font-family="Liberation Sans,sans-serif" font-size="16" fill="#1c1c1c">0</text><path d="M682.2 960V971.5" stroke="#111" stroke-width="1.6"/><text transform="translate(684.7 978.2) scale(.96 1)" font-family="Liberation Sans,sans-serif" font-size="16" fill="#1c1c1c">-4</text><path d="M788.2 960V971.5" stroke="#111" stroke-width="1.6"/><text transform="translate(790.7 978.2) scale(.96 1)" font-family="Liberation Sans,sans-serif" font-size="16" fill="#1c1c1c">-2</text><path d="M894.2 960V971.5" stroke="#111" stroke-width="1.6"/><text transform="translate(896.7 978.2) scale(.96 1)" font-family="Liberation Sans,sans-serif" font-size="16" fill="#1c1c1c">0</text><path d="M1000.2 960V971.5" stroke="#111" stroke-width="1.6"/><text transform="translate(1002.7 978.2) scale(.96 1)" font-family="Liberation Sans,sans-serif" font-size="16" fill="#1c1c1c">2</text><path d="M1106.2 960V971.5" stroke="#111" stroke-width="1.6"/><text transform="translate(1108.7 978.2) scale(.96 1)" font-family="Liberation Sans,sans-serif" font-size="16" fill="#1c1c1c">4</text><path d="M1212.2 960V971.5" stroke="#111" stroke-width="1.6"/><text transform="translate(1214.7 978.2) scale(.96 1)" font-family="Liberation Sans,sans-serif" font-size="16" fill="#1c1c1c">6</text><path d="M1318.2 960V971.5" stroke="#111" stroke-width="1.6"/><text transform="translate(1320.7 978.2) scale(.96 1)" font-family="Liberation Sans,sans-serif" font-size="16" fill="#1c1c1c">8</text><path d="M1424.2 960V971.5" stroke="#111" stroke-width="1.6"/><text transform="translate(1426.7 978.2) scale(.96 1)" font-family="Liberation Sans,sans-serif" font-size="16" fill="#1c1c1c">10</text><path d="M1530.2 960V971.5" stroke="#111" stroke-width="1.6"/><text transform="translate(1532.7 978.2) scale(.96 1)" font-family="Liberation Sans,sans-serif" font-size="16" fill="#1c1c1c">12</text></svg>
<div style="position:absolute;left:1563.00px;top:75.00px;width:282.00px;height:900.00px;background:#333;"></div>
<div style="position:absolute;left:1563.00px;top:76.70px;width:1.30px;height:898.30px;background:#0c0c0c;"></div>
<div style="position:absolute;left:1845.00px;top:76.70px;width:59.00px;height:898.30px;background:#333;"></div>
<div style="position:absolute;left:1844.00px;top:76.70px;width:1.00px;height:883.30px;background:#fff;"></div>
<div style="position:absolute;left:1844.00px;top:960.00px;width:1.00px;height:15.00px;background:#0a0a0a;"></div>
<span style="position:absolute;left:1578.67px;top:81px;font:700 14.5px/1 'Liberation Sans',sans-serif;color:#fff;white-space:nowrap;transform-origin:0 0;transform:scaleX(0.8756);-webkit-text-stroke:.3px #fff;">LAYERS:</span>
<span style="position:absolute;left:1639.61px;top:81px;font:700 14.5px/1 'Liberation Sans',sans-serif;color:#ffb300;white-space:nowrap;transform-origin:0 0;transform:scaleX(0.8874);-webkit-text-stroke:.3px #ffb300;">SETTINGS</span>
<svg style="position:absolute;left:1707.00px;top:78.20px" width="20" height="20" viewBox="-10 -10 20 20"><circle r="5.60" fill="none" stroke="#ccc" stroke-width="1.00"/><circle cx="0" cy="-2.69" r="0.78" fill="#ccc"/><rect x="-0.62" y="-1.23" width="1.23" height="4.20" fill="#ccc"/></svg>
<svg style="position:absolute;left:1807px;top:74px" width="30" height="30" viewBox="-15 -15 30 30"><circle r="11.6" fill="none" stroke="#fff" stroke-width="2"/><path d="M-4.6 -4.6l9.2 9.2M4.6 -4.6l-9.2 9.2" stroke="#fff" stroke-width="3.2"/></svg>
<span style="position:absolute;left:1575.75px;top:123px;font:700 21.4px/1 'Liberation Sans',sans-serif;color:#fff;white-space:nowrap;transform-origin:0 0;transform:scaleX(0.8973);-webkit-text-stroke:.3px #fff;">ENABLE</span>
<span style="position:absolute;left:1569.78px;top:170px;font:700 20.9px/1 'Liberation Sans',sans-serif;color:#fff;white-space:nowrap;transform-origin:0 0;transform:scaleX(0.8990);-webkit-text-stroke:.3px #fff;">PROCESS</span>
<span style="position:absolute;left:1570.43px;top:218px;font:700 20.9px/1 'Liberation Sans',sans-serif;color:#fff;white-space:nowrap;transform-origin:0 0;transform:scaleX(0.9151);-webkit-text-stroke:.3px #fff;">SPEED</span>
<span style="position:absolute;left:1570.84px;top:255px;font:700 17.4px/1 'Liberation Sans',sans-serif;color:#fff;white-space:nowrap;transform-origin:0 0;transform:scaleX(0.9405);-webkit-text-stroke:.3px #fff;">TOOLPATH</span>
<span style="position:absolute;left:1582.45px;top:276px;font:700 17.2px/1 'Liberation Sans',sans-serif;color:#fff;white-space:nowrap;transform-origin:0 0;transform:scaleX(0.9434);-webkit-text-stroke:.3px #fff;">END SPEED</span>
<span style="position:absolute;left:1570.84px;top:301px;font:700 17.2px/1 'Liberation Sans',sans-serif;color:#fff;white-space:nowrap;transform-origin:0 0;transform:scaleX(0.9515);-webkit-text-stroke:.3px #fff;">TOOLPATH</span>
<span style="position:absolute;left:1582.44px;top:322px;font:700 17.4px/1 'Liberation Sans',sans-serif;color:#fff;white-space:nowrap;transform-origin:0 0;transform:scaleX(0.9376);-webkit-text-stroke:.3px #fff;">END DISTANCE</span>
<span style="position:absolute;left:1570.81px;top:360px;font:700 21.2px/1 'Liberation Sans',sans-serif;color:#fff;white-space:nowrap;transform-origin:0 0;transform:scaleX(0.9107);-webkit-text-stroke:.3px #fff;">THC</span>
<span style="position:absolute;left:1569.73px;top:408px;font:700 21.2px/1 'Liberation Sans',sans-serif;color:#fff;white-space:nowrap;transform-origin:0 0;transform:scaleX(0.9182);-webkit-text-stroke:.3px #fff;">KERF</span>
<svg style="position:absolute;left:1719px;top:120px" width="24" height="24" viewBox="-4 -4 24 24"><rect x="1.2" y="1.2" width="12.8" height="13.6" fill="none" stroke="#7e7ec2" stroke-width="2.4"/><path d="M1.8 5.6l5.2 5.6L15.5 -.6" fill="none" stroke="#fff" stroke-width="3.2" stroke-linecap="round" stroke-linejoin="round"/></svg>
<svg style="position:absolute;left:1719px;top:358px" width="24" height="24" viewBox="-4 -4 24 24"><rect x="1.2" y="1.2" width="12.8" height="13.6" fill="none" stroke="#7e7ec2" stroke-width="2.4"/><path d="M1.8 5.6l5.2 5.6L15.5 -.6" fill="none" stroke="#fff" stroke-width="3.2" stroke-linecap="round" stroke-linejoin="round"/></svg>
<div style="position:absolute;left:1675.00px;top:157.50px;width:155.00px;height:38.10px;background:linear-gradient(#585858,#4b4b4b);border:1px solid #e6e6e6;box-sizing:border-box"></div>
<div style="position:absolute;left:1814.00px;top:158.50px;width:15.00px;height:36.10px;background:linear-gradient(#5a5a5a,#484848);border-left:1px solid #3c3c3c;border-bottom:1px solid #222;box-sizing:border-box"></div>
<svg style="position:absolute;left:1816px;top:172px" width="10" height="8" viewBox="0 0 10 8"><path d="M1.6 2h6.6L4.9 6z" fill="#fff"/></svg>
<span style="position:absolute;left:1679.71px;top:169px;font:400 15.4px/1 'Liberation Sans',sans-serif;color:#c4c4c4;white-space:nowrap;transform-origin:0 0;transform:scaleX(0.8914);">CUTTING</span>
<div style="position:absolute;left:1722.00px;top:206.80px;width:108.00px;height:37.20px;background:#222;border-radius:6px"></div>
<span style="position:absolute;left:1770.76px;top:217px;font:700 14.5px/1 'Liberation Sans',sans-serif;color:#00f0ff;white-space:nowrap;transform-origin:0 0;transform:scaleX(1.2777);-webkit-text-stroke:.3px #00f0ff;">0</span>
<div style="position:absolute;left:1722.00px;top:254.40px;width:108.00px;height:37.30px;background:#222;border-radius:6px"></div>
<span style="position:absolute;left:1770.76px;top:265px;font:700 14.5px/1 'Liberation Sans',sans-serif;color:#00f0ff;white-space:nowrap;transform-origin:0 0;transform:scaleX(1.2777);-webkit-text-stroke:.3px #00f0ff;">0</span>
<div style="position:absolute;left:1722.00px;top:301.70px;width:108.00px;height:37.80px;background:#222;border-radius:6px"></div>
<span style="position:absolute;left:1770.76px;top:313px;font:700 14.5px/1 'Liberation Sans',sans-serif;color:#00f0ff;white-space:nowrap;transform-origin:0 0;transform:scaleX(1.2777);-webkit-text-stroke:.3px #00f0ff;">0</span>
<div style="position:absolute;left:1722.00px;top:397.40px;width:108.00px;height:37.30px;background:#222;border-radius:6px"></div>
<span style="position:absolute;left:1770.76px;top:408px;font:700 14.5px/1 'Liberation Sans',sans-serif;color:#00f0ff;white-space:nowrap;transform-origin:0 0;transform:scaleX(1.2777);-webkit-text-stroke:.3px #00f0ff;">0</span>
<div style="position:absolute;left:1851.00px;top:82.30px;width:59.00px;height:51.30px;background:#4d4d4f;border-radius:6px"></div>
<div style="position:absolute;left:1855.00px;top:85.00px;width:22.00px;height:20.50px;background:#80ff00;border-radius:3.5px"></div>
<div style="position:absolute;left:1881.00px;top:85.40px;width:22.00px;height:20.10px;background:#8000ff;border-radius:3px"></div>
<div style="position:absolute;left:1855.00px;top:110.00px;width:22.00px;height:20.00px;background:#0080ff;border-radius:3px"></div>
<div style="position:absolute;left:1881.00px;top:110.00px;width:22.00px;height:20.00px;background:#ff8000;border-radius:3px"></div>
<svg style="position:absolute;left:1860px;top:90px" width="40" height="40" viewBox="1860 90 40 40"><circle cx="1878.7" cy="108" r="5" fill="#555"/><g transform="rotate(-8 1878.7 108)"><path d="M1876.06 97.73 L1876.22 93.81 L1881.18 93.81 L1881.34 97.73 L1884.10 98.88 L1886.98 96.22 L1890.48 99.72 L1887.82 102.60 L1888.97 105.36 L1892.89 105.52 L1892.89 110.48 L1888.97 110.64 L1887.82 113.40 L1890.48 116.28 L1886.98 119.78 L1884.10 117.12 L1881.34 118.27 L1881.18 122.19 L1876.22 122.19 L1876.06 118.27 L1873.30 117.12 L1870.42 119.78 L1866.92 116.28 L1869.58 113.40 L1868.43 110.64 L1864.51 110.48 L1864.51 105.52 L1868.43 105.36 L1869.58 102.60 L1866.92 99.72 L1870.42 96.22 L1873.30 98.88Z M1874.10 108.00 a4.60 4.60 0 1 0 9.20 0 a4.60 4.60 0 1 0 -9.20 0Z" fill="#fff" fill-rule="evenodd" stroke="#000" stroke-width="1.5" stroke-linejoin="round"/></g></svg>
<div style="position:absolute;left:1851.00px;top:139.00px;width:59.00px;height:51.60px;background:#4d4d4f;border-radius:6px"></div>
<div style="position:absolute;left:1858.60px;top:145.60px;width:40.60px;height:37.80px;background:#000;border-radius:6px"></div>
<div style="position:absolute;left:1851.00px;top:195.90px;width:59.00px;height:51.60px;background:#4d4d4f;border-radius:6px"></div>
<div style="position:absolute;left:1858.60px;top:202.50px;width:40.60px;height:37.80px;background:#b00000;border-radius:6px"></div>
<div style="position:absolute;left:1851.00px;top:252.60px;width:59.00px;height:51.60px;background:#4d4d4f;border-radius:6px"></div>
<div style="position:absolute;left:1858.60px;top:259.20px;width:40.60px;height:37.80px;background:#00c800;border-radius:6px"></div>
<div style="position:absolute;left:1851.00px;top:309.30px;width:59.00px;height:51.60px;background:#4d4d4f;border-radius:6px"></div>
<div style="position:absolute;left:1858.60px;top:315.90px;width:40.60px;height:37.80px;background:#8030ff;border-radius:6px"></div>
<div style="position:absolute;left:1851.00px;top:366.10px;width:59.00px;height:51.60px;background:#4d4d4f;border-radius:6px"></div>
<div style="position:absolute;left:1858.60px;top:372.70px;width:40.60px;height:37.80px;background:#f818c0;border-radius:6px"></div>
<div style="position:absolute;left:1851.00px;top:423.00px;width:59.00px;height:51.60px;background:#4d4d4f;border-radius:6px"></div>
<div style="position:absolute;left:1858.60px;top:429.60px;width:40.60px;height:37.80px;background:#ff5800;border-radius:6px"></div>
<div style="position:absolute;left:1851.60px;top:479.40px;width:60.40px;height:51.20px;background:#000;border:1.4px solid #fff;border-radius:6px;box-sizing:border-box"></div>
<div style="position:absolute;left:1858.60px;top:486.60px;width:40.60px;height:37.80px;background:#ffb800;border-radius:6px"></div>
<div style="position:absolute;left:1845.00px;top:878.00px;width:6.00px;height:1.00px;background:#1818e8;"></div>
<div style="position:absolute;left:1851.00px;top:858.00px;width:59.00px;height:52.00px;background:#555557;border:1px solid #626264;box-sizing:border-box"></div>
<svg style="position:absolute;left:1858px;top:865px" width="42" height="38" viewBox="0 0 28 25.2" preserveAspectRatio="none"><path d="M24 6H9.5Q3.5 6 3.5 12" fill="none" stroke="#fff" stroke-width="4.6"/><path d="M20.3 0L28 6 20.3 12.2z" fill="#fff"/><path d="M4 19.2H18.5Q24.5 19.2 24.5 13.2" fill="none" stroke="#fff" stroke-width="4.6"/><path d="M7.7 13L0 19.2 7.7 25.2z" fill="#fff"/><rect x="8.4" y="8.6" width="11.4" height="7.8" fill="#fff" stroke="#555557" stroke-width="2.4"/></svg>
</div></body></html>
